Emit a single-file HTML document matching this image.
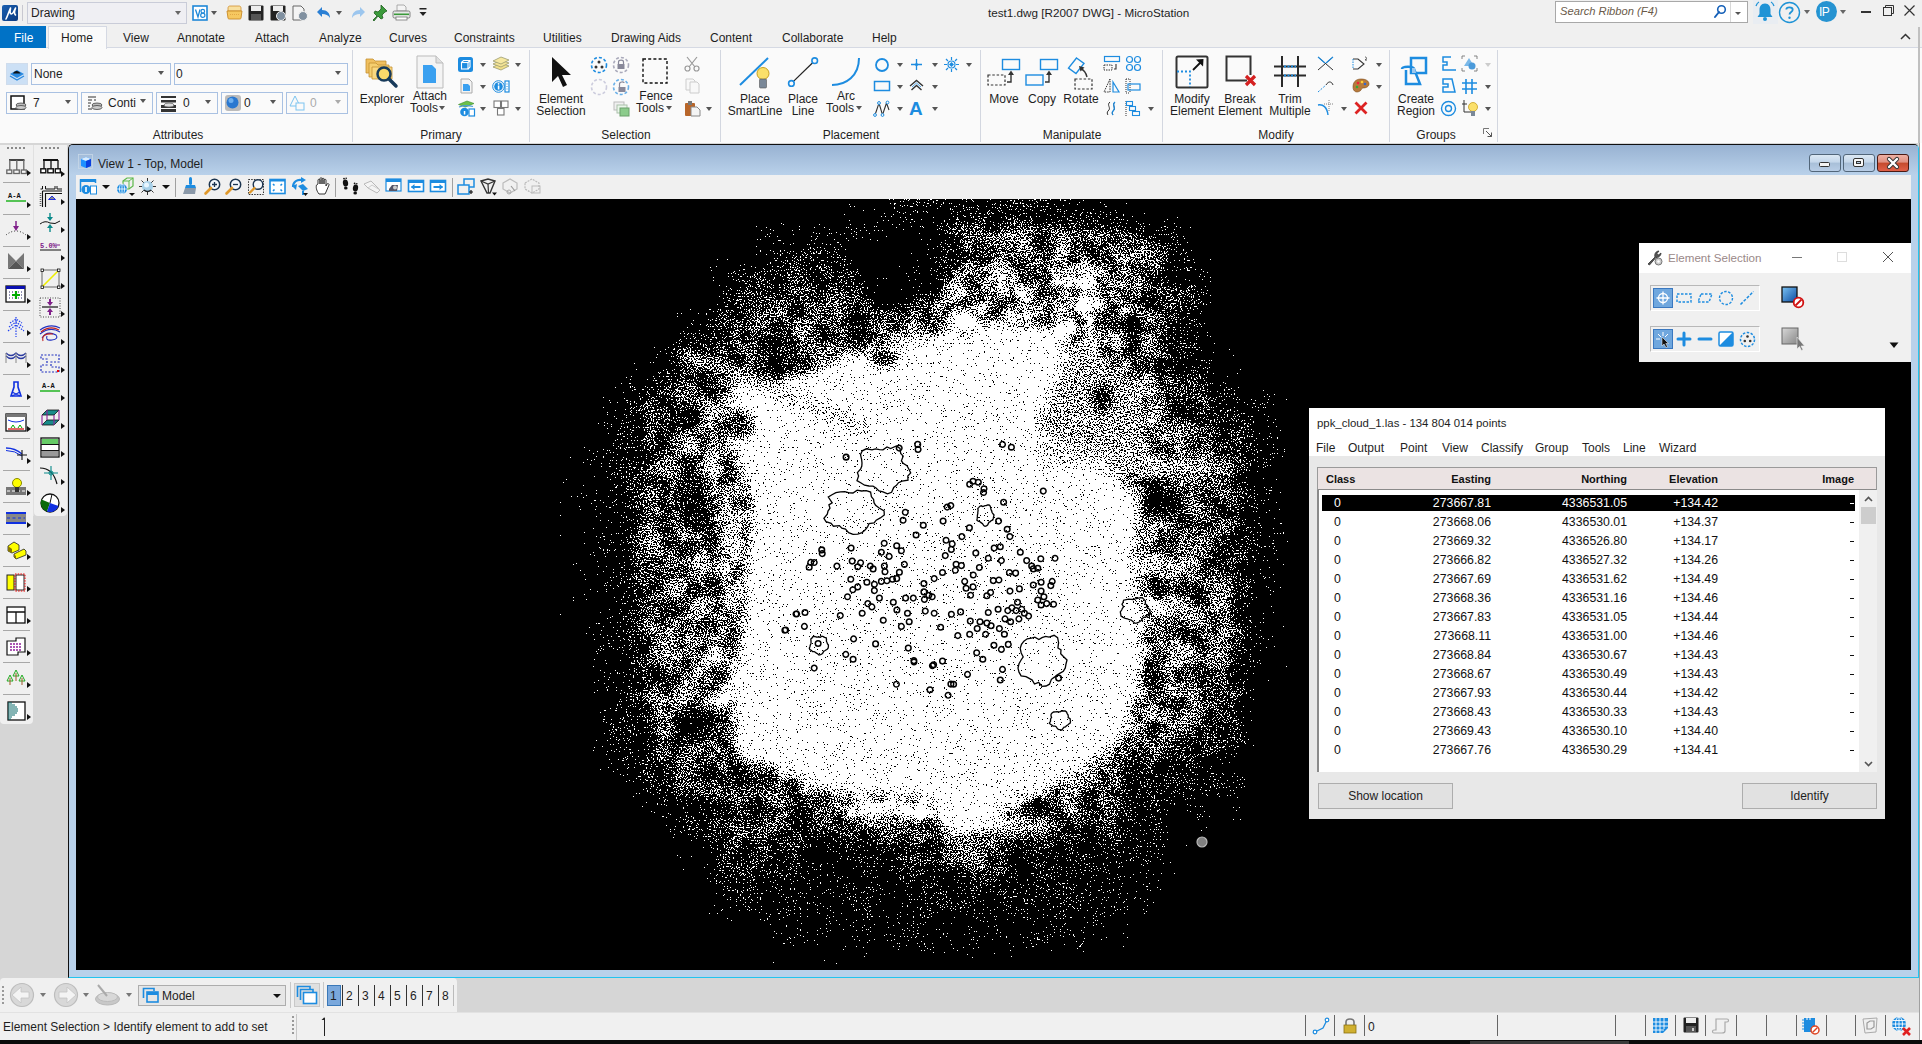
<!DOCTYPE html>
<html><head><meta charset="utf-8">
<style>
*{box-sizing:border-box;margin:0;padding:0}
html,body{width:1922px;height:1044px;overflow:hidden;background:#000}
body{position:relative;font-family:"Liberation Sans",sans-serif;font-size:12px;color:#1e1e1e}
.a{position:absolute}
.t{position:absolute;white-space:nowrap;line-height:14px}
.dd{position:absolute;width:0;height:0;border-left:3.5px solid transparent;border-right:3.5px solid transparent;border-top:4px solid #666}
svg{position:absolute;overflow:visible}
</style></head><body>
<!-- title bar -->
<div class="a" style="left:0;top:0;width:1922px;height:26px;background:#f0f0f0"></div>
<!-- tab row -->
<div class="a" style="left:0;top:26px;width:1922px;height:22px;background:#f0f0f0;border-bottom:1px solid #d5d9e3"></div>
<!-- ribbon body -->
<div class="a" style="left:0;top:48px;width:1922px;height:95px;background:#fafafa"></div>
<div class="a" style="left:1918px;top:27px;width:2px;height:117px;background:#c0c0c0"></div>
<!-- workspace -->
<div class="a" style="left:0;top:143px;width:1920px;height:869px;background:#d6d6d6"></div>
<div class="a" style="left:1919px;top:143px;width:3px;height:901px;background:#fff"></div>
<div class="a" style="left:1919px;top:143px;width:1px;height:897px;background:#a0a0a0"></div>
<!-- toolboxes -->
<div class="a" style="left:0;top:145px;width:33px;height:579px;background:#f0f0f0;border-radius:0 0 4px 4px"></div>
<div class="a" style="left:34px;top:145px;width:33px;height:371px;background:#f0f0f0;border-radius:0 0 4px 4px"></div>
<!-- view window -->
<div class="a" style="left:68px;top:144px;width:1851px;height:834px;background:#b9d1ea;border-left:1px solid #101010;border-top:1px solid #101010;border-right:1px solid #23c4ee;border-bottom:1px solid #23c4ee;border-radius:5px 5px 0 0"></div>
<div class="a" style="left:69px;top:145px;width:1849px;height:30px;background:linear-gradient(#98b2d2,#b9d1ea);border-radius:4px 4px 0 0"></div>
<div class="a" style="left:76px;top:175px;width:1835px;height:24px;background:#f0f0f0"></div>
<div class="a" style="left:76px;top:199px;width:1835px;height:771px;background:#000"></div>
<!-- bottom toolbar -->
<div class="a" style="left:0;top:978px;width:457px;height:34px;background:#f0f0f0;border-radius:4px 4px 0 0"></div>
<!-- status bar -->
<div class="a" style="left:0;top:1012px;width:1919px;height:28px;background:#f0f0f0;border-top:1px solid #e2e2e2"></div>
<div class="a" style="left:0;top:1040px;width:1922px;height:4px;background:#0a0a0a"></div>
<svg width="1835" height="771" style="left:76px;top:199px;overflow:hidden">
<defs>
<filter id="b12" x="-100" y="-100" width="2035" height="971" filterUnits="userSpaceOnUse" color-interpolation-filters="sRGB"><feGaussianBlur in="SourceGraphic" stdDeviation="10" result="d"/>
<feTurbulence type="fractalNoise" baseFrequency="0.045" numOctaves="3" seed="11" result="ln"/>
<feColorMatrix in="ln" type="matrix" values="1 0 0 0 0 1 0 0 0 0 1 0 0 0 0 0 0 0 0 1" result="ln1"/>
<feComponentTransfer in="ln1" result="lu"><feFuncR type="table" tableValues="0.0000 0.0000 0.0000 0.0000 0.0001 0.0003 0.0010 0.0024 0.0059 0.0118 0.0212 0.0379 0.0587 0.0856 0.1243 0.1652 0.2223 0.2784 0.3428 0.4252 0.4966 0.5789 0.6601 0.7238 0.7889 0.8369 0.8785 0.9179 0.9442 0.9642 0.9805 0.9896 0.9956 0.9980 0.9991 0.9997 0.9999 1.0000 1.0000 1.0000 1.0000"/><feFuncG type="table" tableValues="0.0000 0.0000 0.0000 0.0000 0.0001 0.0003 0.0010 0.0024 0.0059 0.0118 0.0212 0.0379 0.0587 0.0856 0.1243 0.1652 0.2223 0.2784 0.3428 0.4252 0.4966 0.5789 0.6601 0.7238 0.7889 0.8369 0.8785 0.9179 0.9442 0.9642 0.9805 0.9896 0.9956 0.9980 0.9991 0.9997 0.9999 1.0000 1.0000 1.0000 1.0000"/><feFuncB type="table" tableValues="0.0000 0.0000 0.0000 0.0000 0.0001 0.0003 0.0010 0.0024 0.0059 0.0118 0.0212 0.0379 0.0587 0.0856 0.1243 0.1652 0.2223 0.2784 0.3428 0.4252 0.4966 0.5789 0.6601 0.7238 0.7889 0.8369 0.8785 0.9179 0.9442 0.9642 0.9805 0.9896 0.9956 0.9980 0.9991 0.9997 0.9999 1.0000 1.0000 1.0000 1.0000"/></feComponentTransfer>
<feComposite in="d" in2="lu" operator="arithmetic" k1="1.4" k2="0.3" k3="0" k4="0"/></filter>
<filter id="b4" x="-100" y="-100" width="2035" height="971" filterUnits="userSpaceOnUse"><feGaussianBlur stdDeviation="6"/></filter>
<filter id="b3" x="-100" y="-100" width="2035" height="971" filterUnits="userSpaceOnUse"><feGaussianBlur stdDeviation="4"/></filter>
<filter id="cl" x="0" y="0" width="1835" height="771" filterUnits="userSpaceOnUse" color-interpolation-filters="sRGB">
<feTurbulence type="fractalNoise" baseFrequency="0.7" numOctaves="2" seed="7" result="n"/>
<feColorMatrix in="n" type="matrix" values="1 0 0 0 0 1 0 0 0 0 1 0 0 0 0 0 0 0 0 1" result="n1"/>
<feComponentTransfer in="n1" result="u"><feFuncR type="table" tableValues="0.0000 0.0000 0.0000 0.0000 0.0000 0.0001 0.0004 0.0012 0.0031 0.0068 0.0136 0.0277 0.0462 0.0706 0.1071 0.1467 0.2017 0.2570 0.3229 0.4087 0.4834 0.5808 0.6697 0.7394 0.8090 0.8574 0.8977 0.9349 0.9586 0.9757 0.9883 0.9943 0.9977 0.9991 0.9996 0.9999 1.0000 1.0000 1.0000 1.0000 1.0000"/><feFuncG type="table" tableValues="0.0000 0.0000 0.0000 0.0000 0.0000 0.0001 0.0004 0.0012 0.0031 0.0068 0.0136 0.0277 0.0462 0.0706 0.1071 0.1467 0.2017 0.2570 0.3229 0.4087 0.4834 0.5808 0.6697 0.7394 0.8090 0.8574 0.8977 0.9349 0.9586 0.9757 0.9883 0.9943 0.9977 0.9991 0.9996 0.9999 1.0000 1.0000 1.0000 1.0000 1.0000"/><feFuncB type="table" tableValues="0.0000 0.0000 0.0000 0.0000 0.0000 0.0001 0.0004 0.0012 0.0031 0.0068 0.0136 0.0277 0.0462 0.0706 0.1071 0.1467 0.2017 0.2570 0.3229 0.4087 0.4834 0.5808 0.6697 0.7394 0.8090 0.8574 0.8977 0.9349 0.9586 0.9757 0.9883 0.9943 0.9977 0.9991 0.9996 0.9999 1.0000 1.0000 1.0000 1.0000 1.0000"/></feComponentTransfer>
<feComposite in="SourceGraphic" in2="u" operator="arithmetic" k1="0" k2="1" k3="1" k4="-0.502" result="s"/>
<feComponentTransfer in="s"><feFuncR type="discrete" tableValues="0 1"/><feFuncG type="discrete" tableValues="0 1"/><feFuncB type="discrete" tableValues="0 1"/><feFuncA type="linear" slope="0" intercept="1"/></feComponentTransfer>
</filter>
</defs>
<g filter="url(#cl)"><rect x="-60" y="-60" width="1955" height="891" fill="#000"/>
<g filter="url(#b12)"><rect x="-60" y="-60" width="1955" height="891" fill="#000"/><rect x="764" y="-9" width="40" height="40" fill="rgb(5,5,5)"/><rect x="804" y="-9" width="40" height="40" fill="rgb(9,9,9)"/><rect x="844" y="-9" width="40" height="40" fill="rgb(18,18,18)"/><rect x="884" y="-9" width="40" height="40" fill="rgb(22,22,22)"/><rect x="924" y="-9" width="40" height="40" fill="rgb(22,22,22)"/><rect x="964" y="-9" width="40" height="40" fill="rgb(14,14,14)"/><rect x="1004" y="-9" width="40" height="40" fill="rgb(7,7,7)"/><rect x="684" y="31" width="40" height="40" fill="rgb(14,14,14)"/><rect x="724" y="31" width="40" height="40" fill="rgb(18,18,18)"/><rect x="764" y="31" width="40" height="40" fill="rgb(9,9,9)"/><rect x="804" y="31" width="40" height="40" fill="rgb(5,5,5)"/><rect x="844" y="31" width="40" height="40" fill="rgb(52,52,52)"/><rect x="884" y="31" width="40" height="40" fill="rgb(94,94,94)"/><rect x="924" y="31" width="40" height="40" fill="rgb(108,108,108)"/><rect x="964" y="31" width="40" height="40" fill="rgb(108,108,108)"/><rect x="1004" y="31" width="40" height="40" fill="rgb(94,94,94)"/><rect x="1044" y="31" width="40" height="40" fill="rgb(80,80,80)"/><rect x="1084" y="31" width="40" height="40" fill="rgb(9,9,9)"/><rect x="644" y="71" width="40" height="40" fill="rgb(28,28,28)"/><rect x="684" y="71" width="40" height="40" fill="rgb(52,52,52)"/><rect x="724" y="71" width="40" height="40" fill="rgb(66,66,66)"/><rect x="764" y="71" width="40" height="40" fill="rgb(28,28,28)"/><rect x="804" y="71" width="40" height="40" fill="rgb(9,9,9)"/><rect x="844" y="71" width="40" height="40" fill="rgb(108,108,108)"/><rect x="884" y="71" width="40" height="40" fill="rgb(148,148,148)"/><rect x="924" y="71" width="40" height="40" fill="rgb(148,148,148)"/><rect x="964" y="71" width="40" height="40" fill="rgb(148,148,148)"/><rect x="1004" y="71" width="40" height="40" fill="rgb(148,148,148)"/><rect x="1044" y="71" width="40" height="40" fill="rgb(94,94,94)"/><rect x="1084" y="71" width="40" height="40" fill="rgb(38,38,38)"/><rect x="604" y="111" width="40" height="40" fill="rgb(9,9,9)"/><rect x="644" y="111" width="40" height="40" fill="rgb(52,52,52)"/><rect x="684" y="111" width="40" height="40" fill="rgb(80,80,80)"/><rect x="724" y="111" width="40" height="40" fill="rgb(94,94,94)"/><rect x="764" y="111" width="40" height="40" fill="rgb(80,80,80)"/><rect x="804" y="111" width="40" height="40" fill="rgb(94,94,94)"/><rect x="844" y="111" width="40" height="40" fill="rgb(148,148,148)"/><rect x="884" y="111" width="40" height="40" fill="rgb(173,173,173)"/><rect x="924" y="111" width="40" height="40" fill="rgb(173,173,173)"/><rect x="964" y="111" width="40" height="40" fill="rgb(173,173,173)"/><rect x="1004" y="111" width="40" height="40" fill="rgb(173,173,173)"/><rect x="1044" y="111" width="40" height="40" fill="rgb(94,94,94)"/><rect x="1084" y="111" width="40" height="40" fill="rgb(18,18,18)"/><rect x="564" y="151" width="40" height="40" fill="rgb(9,9,9)"/><rect x="604" y="151" width="40" height="40" fill="rgb(38,38,38)"/><rect x="644" y="151" width="40" height="40" fill="rgb(66,66,66)"/><rect x="684" y="151" width="40" height="40" fill="rgb(66,66,66)"/><rect x="724" y="151" width="40" height="40" fill="rgb(94,94,94)"/><rect x="764" y="151" width="40" height="40" fill="rgb(122,122,122)"/><rect x="804" y="151" width="40" height="40" fill="rgb(94,94,94)"/><rect x="844" y="151" width="40" height="40" fill="rgb(148,148,148)"/><rect x="884" y="151" width="40" height="40" fill="rgb(194,194,194)"/><rect x="924" y="151" width="40" height="40" fill="rgb(194,194,194)"/><rect x="964" y="151" width="40" height="40" fill="rgb(148,148,148)"/><rect x="1004" y="151" width="40" height="40" fill="rgb(148,148,148)"/><rect x="1044" y="151" width="40" height="40" fill="rgb(122,122,122)"/><rect x="1084" y="151" width="40" height="40" fill="rgb(28,28,28)"/><rect x="1124" y="151" width="40" height="40" fill="rgb(5,5,5)"/><rect x="524" y="191" width="40" height="40" fill="rgb(9,9,9)"/><rect x="564" y="191" width="40" height="40" fill="rgb(58,58,58)"/><rect x="604" y="191" width="40" height="40" fill="rgb(122,122,122)"/><rect x="644" y="191" width="40" height="40" fill="rgb(94,94,94)"/><rect x="684" y="191" width="40" height="40" fill="rgb(148,148,148)"/><rect x="724" y="191" width="40" height="40" fill="rgb(148,148,148)"/><rect x="764" y="191" width="40" height="40" fill="rgb(148,148,148)"/><rect x="804" y="191" width="40" height="40" fill="rgb(148,148,148)"/><rect x="844" y="191" width="40" height="40" fill="rgb(194,194,194)"/><rect x="884" y="191" width="40" height="40" fill="rgb(194,194,194)"/><rect x="924" y="191" width="40" height="40" fill="rgb(194,194,194)"/><rect x="964" y="191" width="40" height="40" fill="rgb(148,148,148)"/><rect x="1004" y="191" width="40" height="40" fill="rgb(122,122,122)"/><rect x="1044" y="191" width="40" height="40" fill="rgb(122,122,122)"/><rect x="1084" y="191" width="40" height="40" fill="rgb(66,66,66)"/><rect x="1124" y="191" width="40" height="40" fill="rgb(28,28,28)"/><rect x="1164" y="191" width="40" height="40" fill="rgb(9,9,9)"/><rect x="484" y="231" width="40" height="40" fill="rgb(3,3,3)"/><rect x="524" y="231" width="40" height="40" fill="rgb(11,11,11)"/><rect x="564" y="231" width="40" height="40" fill="rgb(86,86,86)"/><rect x="604" y="231" width="40" height="40" fill="rgb(122,122,122)"/><rect x="644" y="231" width="40" height="40" fill="rgb(122,122,122)"/><rect x="684" y="231" width="40" height="40" fill="rgb(173,173,173)"/><rect x="724" y="231" width="40" height="40" fill="rgb(173,173,173)"/><rect x="764" y="231" width="40" height="40" fill="rgb(173,173,173)"/><rect x="804" y="231" width="40" height="40" fill="rgb(173,173,173)"/><rect x="844" y="231" width="40" height="40" fill="rgb(194,194,194)"/><rect x="884" y="231" width="40" height="40" fill="rgb(194,194,194)"/><rect x="924" y="231" width="40" height="40" fill="rgb(194,194,194)"/><rect x="964" y="231" width="40" height="40" fill="rgb(148,148,148)"/><rect x="1004" y="231" width="40" height="40" fill="rgb(148,148,148)"/><rect x="1044" y="231" width="40" height="40" fill="rgb(148,148,148)"/><rect x="1084" y="231" width="40" height="40" fill="rgb(94,94,94)"/><rect x="1124" y="231" width="40" height="40" fill="rgb(66,66,66)"/><rect x="1164" y="231" width="40" height="40" fill="rgb(12,12,12)"/><rect x="484" y="271" width="40" height="40" fill="rgb(3,3,3)"/><rect x="524" y="271" width="40" height="40" fill="rgb(11,11,11)"/><rect x="564" y="271" width="40" height="40" fill="rgb(86,86,86)"/><rect x="604" y="271" width="40" height="40" fill="rgb(122,122,122)"/><rect x="644" y="271" width="40" height="40" fill="rgb(122,122,122)"/><rect x="684" y="271" width="40" height="40" fill="rgb(173,173,173)"/><rect x="724" y="271" width="40" height="40" fill="rgb(194,194,194)"/><rect x="764" y="271" width="40" height="40" fill="rgb(194,194,194)"/><rect x="804" y="271" width="40" height="40" fill="rgb(194,194,194)"/><rect x="844" y="271" width="40" height="40" fill="rgb(194,194,194)"/><rect x="884" y="271" width="40" height="40" fill="rgb(194,194,194)"/><rect x="924" y="271" width="40" height="40" fill="rgb(194,194,194)"/><rect x="964" y="271" width="40" height="40" fill="rgb(173,173,173)"/><rect x="1004" y="271" width="40" height="40" fill="rgb(148,148,148)"/><rect x="1044" y="271" width="40" height="40" fill="rgb(94,94,94)"/><rect x="1084" y="271" width="40" height="40" fill="rgb(94,94,94)"/><rect x="1124" y="271" width="40" height="40" fill="rgb(66,66,66)"/><rect x="1164" y="271" width="40" height="40" fill="rgb(9,9,9)"/><rect x="484" y="311" width="40" height="40" fill="rgb(3,3,3)"/><rect x="524" y="311" width="40" height="40" fill="rgb(11,11,11)"/><rect x="564" y="311" width="40" height="40" fill="rgb(114,114,114)"/><rect x="604" y="311" width="40" height="40" fill="rgb(122,122,122)"/><rect x="644" y="311" width="40" height="40" fill="rgb(122,122,122)"/><rect x="684" y="311" width="40" height="40" fill="rgb(194,194,194)"/><rect x="724" y="311" width="40" height="40" fill="rgb(194,194,194)"/><rect x="764" y="311" width="40" height="40" fill="rgb(194,194,194)"/><rect x="804" y="311" width="40" height="40" fill="rgb(194,194,194)"/><rect x="844" y="311" width="40" height="40" fill="rgb(194,194,194)"/><rect x="884" y="311" width="40" height="40" fill="rgb(194,194,194)"/><rect x="924" y="311" width="40" height="40" fill="rgb(194,194,194)"/><rect x="964" y="311" width="40" height="40" fill="rgb(194,194,194)"/><rect x="1004" y="311" width="40" height="40" fill="rgb(148,148,148)"/><rect x="1044" y="311" width="40" height="40" fill="rgb(122,122,122)"/><rect x="1084" y="311" width="40" height="40" fill="rgb(94,94,94)"/><rect x="1124" y="311" width="40" height="40" fill="rgb(66,66,66)"/><rect x="1164" y="311" width="40" height="40" fill="rgb(9,9,9)"/><rect x="484" y="351" width="40" height="40" fill="rgb(3,3,3)"/><rect x="524" y="351" width="40" height="40" fill="rgb(11,11,11)"/><rect x="564" y="351" width="40" height="40" fill="rgb(86,86,86)"/><rect x="604" y="351" width="40" height="40" fill="rgb(122,122,122)"/><rect x="644" y="351" width="40" height="40" fill="rgb(122,122,122)"/><rect x="684" y="351" width="40" height="40" fill="rgb(173,173,173)"/><rect x="724" y="351" width="40" height="40" fill="rgb(194,194,194)"/><rect x="764" y="351" width="40" height="40" fill="rgb(173,173,173)"/><rect x="804" y="351" width="40" height="40" fill="rgb(173,173,173)"/><rect x="844" y="351" width="40" height="40" fill="rgb(173,173,173)"/><rect x="884" y="351" width="40" height="40" fill="rgb(173,173,173)"/><rect x="924" y="351" width="40" height="40" fill="rgb(173,173,173)"/><rect x="964" y="351" width="40" height="40" fill="rgb(173,173,173)"/><rect x="1004" y="351" width="40" height="40" fill="rgb(173,173,173)"/><rect x="1044" y="351" width="40" height="40" fill="rgb(135,135,135)"/><rect x="1084" y="351" width="40" height="40" fill="rgb(108,108,108)"/><rect x="1124" y="351" width="40" height="40" fill="rgb(66,66,66)"/><rect x="1164" y="351" width="40" height="40" fill="rgb(9,9,9)"/><rect x="484" y="391" width="40" height="40" fill="rgb(2,2,2)"/><rect x="524" y="391" width="40" height="40" fill="rgb(9,9,9)"/><rect x="564" y="391" width="40" height="40" fill="rgb(86,86,86)"/><rect x="604" y="391" width="40" height="40" fill="rgb(122,122,122)"/><rect x="644" y="391" width="40" height="40" fill="rgb(122,122,122)"/><rect x="684" y="391" width="40" height="40" fill="rgb(148,148,148)"/><rect x="724" y="391" width="40" height="40" fill="rgb(173,173,173)"/><rect x="764" y="391" width="40" height="40" fill="rgb(173,173,173)"/><rect x="804" y="391" width="40" height="40" fill="rgb(173,173,173)"/><rect x="844" y="391" width="40" height="40" fill="rgb(173,173,173)"/><rect x="884" y="391" width="40" height="40" fill="rgb(173,173,173)"/><rect x="924" y="391" width="40" height="40" fill="rgb(148,148,148)"/><rect x="964" y="391" width="40" height="40" fill="rgb(194,194,194)"/><rect x="1004" y="391" width="40" height="40" fill="rgb(194,194,194)"/><rect x="1044" y="391" width="40" height="40" fill="rgb(161,161,161)"/><rect x="1084" y="391" width="40" height="40" fill="rgb(108,108,108)"/><rect x="1124" y="391" width="40" height="40" fill="rgb(94,94,94)"/><rect x="1164" y="391" width="40" height="40" fill="rgb(5,5,5)"/><rect x="524" y="431" width="40" height="40" fill="rgb(12,12,12)"/><rect x="564" y="431" width="40" height="40" fill="rgb(86,86,86)"/><rect x="604" y="431" width="40" height="40" fill="rgb(122,122,122)"/><rect x="644" y="431" width="40" height="40" fill="rgb(122,122,122)"/><rect x="684" y="431" width="40" height="40" fill="rgb(148,148,148)"/><rect x="724" y="431" width="40" height="40" fill="rgb(173,173,173)"/><rect x="764" y="431" width="40" height="40" fill="rgb(173,173,173)"/><rect x="804" y="431" width="40" height="40" fill="rgb(194,194,194)"/><rect x="844" y="431" width="40" height="40" fill="rgb(194,194,194)"/><rect x="884" y="431" width="40" height="40" fill="rgb(194,194,194)"/><rect x="924" y="431" width="40" height="40" fill="rgb(194,194,194)"/><rect x="964" y="431" width="40" height="40" fill="rgb(194,194,194)"/><rect x="1004" y="431" width="40" height="40" fill="rgb(194,194,194)"/><rect x="1044" y="431" width="40" height="40" fill="rgb(135,135,135)"/><rect x="1084" y="431" width="40" height="40" fill="rgb(108,108,108)"/><rect x="1124" y="431" width="40" height="40" fill="rgb(80,80,80)"/><rect x="1164" y="431" width="40" height="40" fill="rgb(4,4,4)"/><rect x="524" y="471" width="40" height="40" fill="rgb(9,9,9)"/><rect x="564" y="471" width="40" height="40" fill="rgb(80,80,80)"/><rect x="604" y="471" width="40" height="40" fill="rgb(122,122,122)"/><rect x="644" y="471" width="40" height="40" fill="rgb(173,173,173)"/><rect x="684" y="471" width="40" height="40" fill="rgb(194,194,194)"/><rect x="724" y="471" width="40" height="40" fill="rgb(194,194,194)"/><rect x="764" y="471" width="40" height="40" fill="rgb(194,194,194)"/><rect x="804" y="471" width="40" height="40" fill="rgb(173,173,173)"/><rect x="844" y="471" width="40" height="40" fill="rgb(194,194,194)"/><rect x="884" y="471" width="40" height="40" fill="rgb(194,194,194)"/><rect x="924" y="471" width="40" height="40" fill="rgb(173,173,173)"/><rect x="964" y="471" width="40" height="40" fill="rgb(194,194,194)"/><rect x="1004" y="471" width="40" height="40" fill="rgb(173,173,173)"/><rect x="1044" y="471" width="40" height="40" fill="rgb(135,135,135)"/><rect x="1084" y="471" width="40" height="40" fill="rgb(108,108,108)"/><rect x="1124" y="471" width="40" height="40" fill="rgb(66,66,66)"/><rect x="524" y="511" width="40" height="40" fill="rgb(12,12,12)"/><rect x="564" y="511" width="40" height="40" fill="rgb(80,80,80)"/><rect x="604" y="511" width="40" height="40" fill="rgb(94,94,94)"/><rect x="644" y="511" width="40" height="40" fill="rgb(148,148,148)"/><rect x="684" y="511" width="40" height="40" fill="rgb(194,194,194)"/><rect x="724" y="511" width="40" height="40" fill="rgb(194,194,194)"/><rect x="764" y="511" width="40" height="40" fill="rgb(173,173,173)"/><rect x="804" y="511" width="40" height="40" fill="rgb(148,148,148)"/><rect x="844" y="511" width="40" height="40" fill="rgb(194,194,194)"/><rect x="884" y="511" width="40" height="40" fill="rgb(173,173,173)"/><rect x="924" y="511" width="40" height="40" fill="rgb(148,148,148)"/><rect x="964" y="511" width="40" height="40" fill="rgb(148,148,148)"/><rect x="1004" y="511" width="40" height="40" fill="rgb(148,148,148)"/><rect x="1044" y="511" width="40" height="40" fill="rgb(108,108,108)"/><rect x="1084" y="511" width="40" height="40" fill="rgb(80,80,80)"/><rect x="1124" y="511" width="40" height="40" fill="rgb(38,38,38)"/><rect x="524" y="551" width="40" height="40" fill="rgb(5,5,5)"/><rect x="564" y="551" width="40" height="40" fill="rgb(38,38,38)"/><rect x="604" y="551" width="40" height="40" fill="rgb(66,66,66)"/><rect x="644" y="551" width="40" height="40" fill="rgb(108,108,108)"/><rect x="684" y="551" width="40" height="40" fill="rgb(148,148,148)"/><rect x="724" y="551" width="40" height="40" fill="rgb(148,148,148)"/><rect x="764" y="551" width="40" height="40" fill="rgb(148,148,148)"/><rect x="804" y="551" width="40" height="40" fill="rgb(148,148,148)"/><rect x="844" y="551" width="40" height="40" fill="rgb(194,194,194)"/><rect x="884" y="551" width="40" height="40" fill="rgb(173,173,173)"/><rect x="924" y="551" width="40" height="40" fill="rgb(148,148,148)"/><rect x="964" y="551" width="40" height="40" fill="rgb(122,122,122)"/><rect x="1004" y="551" width="40" height="40" fill="rgb(94,94,94)"/><rect x="1044" y="551" width="40" height="40" fill="rgb(28,28,28)"/><rect x="1084" y="551" width="40" height="40" fill="rgb(28,28,28)"/><rect x="1124" y="551" width="40" height="40" fill="rgb(12,12,12)"/><rect x="564" y="591" width="40" height="40" fill="rgb(5,5,5)"/><rect x="604" y="591" width="40" height="40" fill="rgb(28,28,28)"/><rect x="644" y="591" width="40" height="40" fill="rgb(66,66,66)"/><rect x="684" y="591" width="40" height="40" fill="rgb(66,66,66)"/><rect x="724" y="591" width="40" height="40" fill="rgb(52,52,52)"/><rect x="764" y="591" width="40" height="40" fill="rgb(148,148,148)"/><rect x="804" y="591" width="40" height="40" fill="rgb(148,148,148)"/><rect x="844" y="591" width="40" height="40" fill="rgb(173,173,173)"/><rect x="884" y="591" width="40" height="40" fill="rgb(194,194,194)"/><rect x="924" y="591" width="40" height="40" fill="rgb(148,148,148)"/><rect x="964" y="591" width="40" height="40" fill="rgb(122,122,122)"/><rect x="1004" y="591" width="40" height="40" fill="rgb(66,66,66)"/><rect x="1044" y="591" width="40" height="40" fill="rgb(18,18,18)"/><rect x="1084" y="591" width="40" height="40" fill="rgb(9,9,9)"/><rect x="1124" y="591" width="40" height="40" fill="rgb(5,5,5)"/><rect x="604" y="631" width="40" height="40" fill="rgb(5,5,5)"/><rect x="644" y="631" width="40" height="40" fill="rgb(52,52,52)"/><rect x="684" y="631" width="40" height="40" fill="rgb(38,38,38)"/><rect x="724" y="631" width="40" height="40" fill="rgb(12,12,12)"/><rect x="764" y="631" width="40" height="40" fill="rgb(18,18,18)"/><rect x="804" y="631" width="40" height="40" fill="rgb(28,28,28)"/><rect x="844" y="631" width="40" height="40" fill="rgb(66,66,66)"/><rect x="884" y="631" width="40" height="40" fill="rgb(94,94,94)"/><rect x="924" y="631" width="40" height="40" fill="rgb(28,28,28)"/><rect x="964" y="631" width="40" height="40" fill="rgb(18,18,18)"/><rect x="1004" y="631" width="40" height="40" fill="rgb(18,18,18)"/><rect x="1044" y="631" width="40" height="40" fill="rgb(12,12,12)"/><rect x="1084" y="631" width="40" height="40" fill="rgb(4,4,4)"/><rect x="644" y="671" width="40" height="40" fill="rgb(18,18,18)"/><rect x="684" y="671" width="40" height="40" fill="rgb(12,12,12)"/><rect x="724" y="671" width="40" height="40" fill="rgb(9,9,9)"/><rect x="764" y="671" width="40" height="40" fill="rgb(12,12,12)"/><rect x="804" y="671" width="40" height="40" fill="rgb(12,12,12)"/><rect x="844" y="671" width="40" height="40" fill="rgb(18,18,18)"/><rect x="884" y="671" width="40" height="40" fill="rgb(18,18,18)"/><rect x="924" y="671" width="40" height="40" fill="rgb(22,22,22)"/><rect x="964" y="671" width="40" height="40" fill="rgb(18,18,18)"/><rect x="1004" y="671" width="40" height="40" fill="rgb(12,12,12)"/><rect x="1044" y="671" width="40" height="40" fill="rgb(9,9,9)"/><rect x="684" y="711" width="40" height="40" fill="rgb(7,7,7)"/><rect x="724" y="711" width="40" height="40" fill="rgb(9,9,9)"/><rect x="764" y="711" width="40" height="40" fill="rgb(9,9,9)"/><rect x="804" y="711" width="40" height="40" fill="rgb(9,9,9)"/><rect x="844" y="711" width="40" height="40" fill="rgb(9,9,9)"/><rect x="884" y="711" width="40" height="40" fill="rgb(9,9,9)"/><rect x="924" y="711" width="40" height="40" fill="rgb(9,9,9)"/><rect x="964" y="711" width="40" height="40" fill="rgb(9,9,9)"/><rect x="1004" y="711" width="40" height="40" fill="rgb(7,7,7)"/></g>
<g filter="url(#b4)"><polygon points="958,139 1014,146 1068,201 1074,253 1024,261 958,232" fill="rgb(170,170,170)"/><polygon points="656,184 725,177 770,153 844,136 878,136 930,122 982,129 992,156 975,198 958,232 1024,261 1068,301 1059,351 1067,411 1064,471 1054,527 1024,561 984,586 934,601 924,633 874,639 854,601 759,594 708,573 663,561 656,489 670,401 670,351 677,301 663,267 646,232" fill="rgb(247,247,247)"/><polygon points="964,248 1074,256 1156,267 1154,279 1074,271 964,263" fill="rgb(200,200,200)"/><polygon points="604,151 644,163 794,226 792,237 644,174 602,161" fill="rgb(190,190,190)"/></g>
<g filter="url(#b3)"><ellipse cx="819.0" cy="72.0" rx="37.0" ry="39.0" fill="#000" fill-opacity="0.8"/><ellipse cx="782.0" cy="137.5" rx="12.0" ry="15.5" fill="#000" fill-opacity="0.8"/><ellipse cx="808.0" cy="158.5" rx="14.0" ry="8.5" fill="#000" fill-opacity="0.8"/><ellipse cx="699.5" cy="167.0" rx="12.5" ry="14.0" fill="#000" fill-opacity="0.8"/><ellipse cx="611.5" cy="216.5" rx="17.5" ry="15.5" fill="#000" fill-opacity="0.8"/><ellipse cx="661.5" cy="225.5" rx="15.5" ry="13.5" fill="#000" fill-opacity="0.8"/><ellipse cx="617.0" cy="301.5" rx="19.0" ry="34.5" fill="#000" fill-opacity="0.8"/><ellipse cx="858.0" cy="55.0" rx="14.0" ry="50.0" fill="#000" fill-opacity="0.8"/><ellipse cx="1056.0" cy="139.0" rx="9.0" ry="24.0" fill="#000" fill-opacity="0.8"/><ellipse cx="1026.5" cy="198.0" rx="10.5" ry="14.0" fill="#000" fill-opacity="0.8"/><ellipse cx="1085.5" cy="304.5" rx="20.5" ry="17.5" fill="#000" fill-opacity="0.8"/><ellipse cx="622.0" cy="525.0" rx="24.0" ry="19.0" fill="#000" fill-opacity="0.8"/><ellipse cx="670.5" cy="581.5" rx="34.5" ry="10.5" fill="#000" fill-opacity="0.8"/><ellipse cx="971.5" cy="609.5" rx="17.5" ry="10.5" fill="#000" fill-opacity="0.8"/></g>
</g>
<circle cx="1126" cy="643" r="5" fill="#808080" stroke="#b8b8b8" stroke-width="1.2"/>
<path d="M772.9 258.2a2.8 2.8 0 1 0 -5.6 0a2.8 2.8 0 1 0 5.6 0M844.9 250.4a2.8 2.8 0 1 0 -5.6 0a2.8 2.8 0 1 0 5.6 0M938.2 248.2a2.8 2.8 0 1 0 -5.6 0a2.8 2.8 0 1 0 5.6 0M896.5 285.2a2.8 2.8 0 1 0 -5.6 0a2.8 2.8 0 1 0 5.6 0M905.1 283.2a2.8 2.8 0 1 0 -5.6 0a2.8 2.8 0 1 0 5.6 0M910.4 293.5a2.8 2.8 0 1 0 -5.6 0a2.8 2.8 0 1 0 5.6 0M930.4 303.2a2.8 2.8 0 1 0 -5.6 0a2.8 2.8 0 1 0 5.6 0M877.6 306.6a2.8 2.8 0 1 0 -5.6 0a2.8 2.8 0 1 0 5.6 0M832.1 313.2a2.8 2.8 0 1 0 -5.6 0a2.8 2.8 0 1 0 5.6 0M829.9 321.3a2.8 2.8 0 1 0 -5.6 0a2.8 2.8 0 1 0 5.6 0M850.1 326.3a2.8 2.8 0 1 0 -5.6 0a2.8 2.8 0 1 0 5.6 0M842.9 336.0a2.8 2.8 0 1 0 -5.6 0a2.8 2.8 0 1 0 5.6 0M869.9 322.1a2.8 2.8 0 1 0 -5.6 0a2.8 2.8 0 1 0 5.6 0M896.2 328.8a2.8 2.8 0 1 0 -5.6 0a2.8 2.8 0 1 0 5.6 0M925.4 322.1a2.8 2.8 0 1 0 -5.6 0a2.8 2.8 0 1 0 5.6 0M934.0 330.2a2.8 2.8 0 1 0 -5.6 0a2.8 2.8 0 1 0 5.6 0M970.1 292.1a2.8 2.8 0 1 0 -5.6 0a2.8 2.8 0 1 0 5.6 0M777.9 349.1a2.8 2.8 0 1 0 -5.6 0a2.8 2.8 0 1 0 5.6 0M748.5 351.0a2.8 2.8 0 1 0 -5.6 0a2.8 2.8 0 1 0 5.6 0M749.0 354.6a2.8 2.8 0 1 0 -5.6 0a2.8 2.8 0 1 0 5.6 0M741.0 363.5a2.8 2.8 0 1 0 -5.6 0a2.8 2.8 0 1 0 5.6 0M736.0 368.2a2.8 2.8 0 1 0 -5.6 0a2.8 2.8 0 1 0 5.6 0M763.7 367.1a2.8 2.8 0 1 0 -5.6 0a2.8 2.8 0 1 0 5.6 0M811.0 344.3a2.8 2.8 0 1 0 -5.6 0a2.8 2.8 0 1 0 5.6 0M808.2 353.2a2.8 2.8 0 1 0 -5.6 0a2.8 2.8 0 1 0 5.6 0M816.0 357.4a2.8 2.8 0 1 0 -5.6 0a2.8 2.8 0 1 0 5.6 0M823.5 346.8a2.8 2.8 0 1 0 -5.6 0a2.8 2.8 0 1 0 5.6 0M828.2 351.8a2.8 2.8 0 1 0 -5.6 0a2.8 2.8 0 1 0 5.6 0M831.2 365.4a2.8 2.8 0 1 0 -5.6 0a2.8 2.8 0 1 0 5.6 0M779.0 362.1a2.8 2.8 0 1 0 -5.6 0a2.8 2.8 0 1 0 5.6 0M787.4 363.8a2.8 2.8 0 1 0 -5.6 0a2.8 2.8 0 1 0 5.6 0M784.6 367.7a2.8 2.8 0 1 0 -5.6 0a2.8 2.8 0 1 0 5.6 0M797.1 367.1a2.8 2.8 0 1 0 -5.6 0a2.8 2.8 0 1 0 5.6 0M799.9 369.9a2.8 2.8 0 1 0 -5.6 0a2.8 2.8 0 1 0 5.6 0M811.2 367.1a2.8 2.8 0 1 0 -5.6 0a2.8 2.8 0 1 0 5.6 0M811.8 372.7a2.8 2.8 0 1 0 -5.6 0a2.8 2.8 0 1 0 5.6 0M826.2 373.2a2.8 2.8 0 1 0 -5.6 0a2.8 2.8 0 1 0 5.6 0M823.5 379.6a2.8 2.8 0 1 0 -5.6 0a2.8 2.8 0 1 0 5.6 0M819.3 380.2a2.8 2.8 0 1 0 -5.6 0a2.8 2.8 0 1 0 5.6 0M813.7 381.8a2.8 2.8 0 1 0 -5.6 0a2.8 2.8 0 1 0 5.6 0M808.2 382.4a2.8 2.8 0 1 0 -5.6 0a2.8 2.8 0 1 0 5.6 0M777.6 380.2a2.8 2.8 0 1 0 -5.6 0a2.8 2.8 0 1 0 5.6 0M793.7 383.2a2.8 2.8 0 1 0 -5.6 0a2.8 2.8 0 1 0 5.6 0M801.2 385.2a2.8 2.8 0 1 0 -5.6 0a2.8 2.8 0 1 0 5.6 0M784.6 387.9a2.8 2.8 0 1 0 -5.6 0a2.8 2.8 0 1 0 5.6 0M779.6 390.7a2.8 2.8 0 1 0 -5.6 0a2.8 2.8 0 1 0 5.6 0M801.2 391.6a2.8 2.8 0 1 0 -5.6 0a2.8 2.8 0 1 0 5.6 0M774.3 397.7a2.8 2.8 0 1 0 -5.6 0a2.8 2.8 0 1 0 5.6 0M806.2 399.1a2.8 2.8 0 1 0 -5.6 0a2.8 2.8 0 1 0 5.6 0M794.6 404.6a2.8 2.8 0 1 0 -5.6 0a2.8 2.8 0 1 0 5.6 0M798.7 407.9a2.8 2.8 0 1 0 -5.6 0a2.8 2.8 0 1 0 5.6 0M789.0 414.3a2.8 2.8 0 1 0 -5.6 0a2.8 2.8 0 1 0 5.6 0M767.1 416.6a2.8 2.8 0 1 0 -5.6 0a2.8 2.8 0 1 0 5.6 0M723.5 414.9a2.8 2.8 0 1 0 -5.6 0a2.8 2.8 0 1 0 5.6 0M731.8 413.5a2.8 2.8 0 1 0 -5.6 0a2.8 2.8 0 1 0 5.6 0M731.2 427.4a2.8 2.8 0 1 0 -5.6 0a2.8 2.8 0 1 0 5.6 0M712.4 431.0a2.8 2.8 0 1 0 -5.6 0a2.8 2.8 0 1 0 5.6 0M810.1 421.3a2.8 2.8 0 1 0 -5.6 0a2.8 2.8 0 1 0 5.6 0M820.1 403.2a2.8 2.8 0 1 0 -5.6 0a2.8 2.8 0 1 0 5.6 0M823.7 411.0a2.8 2.8 0 1 0 -5.6 0a2.8 2.8 0 1 0 5.6 0M832.4 399.1a2.8 2.8 0 1 0 -5.6 0a2.8 2.8 0 1 0 5.6 0M840.1 399.1a2.8 2.8 0 1 0 -5.6 0a2.8 2.8 0 1 0 5.6 0M834.3 414.3a2.8 2.8 0 1 0 -5.6 0a2.8 2.8 0 1 0 5.6 0M836.0 422.7a2.8 2.8 0 1 0 -5.6 0a2.8 2.8 0 1 0 5.6 0M828.2 427.4a2.8 2.8 0 1 0 -5.6 0a2.8 2.8 0 1 0 5.6 0M850.7 384.6a2.8 2.8 0 1 0 -5.6 0a2.8 2.8 0 1 0 5.6 0M850.7 392.9a2.8 2.8 0 1 0 -5.6 0a2.8 2.8 0 1 0 5.6 0M855.7 396.3a2.8 2.8 0 1 0 -5.6 0a2.8 2.8 0 1 0 5.6 0M859.0 397.7a2.8 2.8 0 1 0 -5.6 0a2.8 2.8 0 1 0 5.6 0M851.2 400.4a2.8 2.8 0 1 0 -5.6 0a2.8 2.8 0 1 0 5.6 0M852.1 412.1a2.8 2.8 0 1 0 -5.6 0a2.8 2.8 0 1 0 5.6 0M861.0 414.3a2.8 2.8 0 1 0 -5.6 0a2.8 2.8 0 1 0 5.6 0M872.9 341.3a2.8 2.8 0 1 0 -5.6 0a2.8 2.8 0 1 0 5.6 0M879.0 344.9a2.8 2.8 0 1 0 -5.6 0a2.8 2.8 0 1 0 5.6 0M878.2 350.4a2.8 2.8 0 1 0 -5.6 0a2.8 2.8 0 1 0 5.6 0M872.1 356.6a2.8 2.8 0 1 0 -5.6 0a2.8 2.8 0 1 0 5.6 0M902.6 354.1a2.8 2.8 0 1 0 -5.6 0a2.8 2.8 0 1 0 5.6 0M915.1 359.3a2.8 2.8 0 1 0 -5.6 0a2.8 2.8 0 1 0 5.6 0M921.0 349.1a2.8 2.8 0 1 0 -5.6 0a2.8 2.8 0 1 0 5.6 0M927.1 347.7a2.8 2.8 0 1 0 -5.6 0a2.8 2.8 0 1 0 5.6 0M928.2 361.6a2.8 2.8 0 1 0 -5.6 0a2.8 2.8 0 1 0 5.6 0M947.1 353.2a2.8 2.8 0 1 0 -5.6 0a2.8 2.8 0 1 0 5.6 0M981.8 359.3a2.8 2.8 0 1 0 -5.6 0a2.8 2.8 0 1 0 5.6 0M953.5 361.6a2.8 2.8 0 1 0 -5.6 0a2.8 2.8 0 1 0 5.6 0M958.5 367.1a2.8 2.8 0 1 0 -5.6 0a2.8 2.8 0 1 0 5.6 0M964.6 369.3a2.8 2.8 0 1 0 -5.6 0a2.8 2.8 0 1 0 5.6 0M960.1 369.9a2.8 2.8 0 1 0 -5.6 0a2.8 2.8 0 1 0 5.6 0M882.9 365.2a2.8 2.8 0 1 0 -5.6 0a2.8 2.8 0 1 0 5.6 0M888.2 366.6a2.8 2.8 0 1 0 -5.6 0a2.8 2.8 0 1 0 5.6 0M882.1 371.3a2.8 2.8 0 1 0 -5.6 0a2.8 2.8 0 1 0 5.6 0M861.0 379.6a2.8 2.8 0 1 0 -5.6 0a2.8 2.8 0 1 0 5.6 0M869.3 373.5a2.8 2.8 0 1 0 -5.6 0a2.8 2.8 0 1 0 5.6 0M900.1 376.0a2.8 2.8 0 1 0 -5.6 0a2.8 2.8 0 1 0 5.6 0M906.2 368.5a2.8 2.8 0 1 0 -5.6 0a2.8 2.8 0 1 0 5.6 0M891.5 382.4a2.8 2.8 0 1 0 -5.6 0a2.8 2.8 0 1 0 5.6 0M899.9 387.9a2.8 2.8 0 1 0 -5.6 0a2.8 2.8 0 1 0 5.6 0M892.9 389.3a2.8 2.8 0 1 0 -5.6 0a2.8 2.8 0 1 0 5.6 0M897.4 396.3a2.8 2.8 0 1 0 -5.6 0a2.8 2.8 0 1 0 5.6 0M913.7 396.8a2.8 2.8 0 1 0 -5.6 0a2.8 2.8 0 1 0 5.6 0M917.4 393.5a2.8 2.8 0 1 0 -5.6 0a2.8 2.8 0 1 0 5.6 0M920.1 381.6a2.8 2.8 0 1 0 -5.6 0a2.8 2.8 0 1 0 5.6 0M925.7 381.0a2.8 2.8 0 1 0 -5.6 0a2.8 2.8 0 1 0 5.6 0M936.2 373.5a2.8 2.8 0 1 0 -5.6 0a2.8 2.8 0 1 0 5.6 0M942.4 374.1a2.8 2.8 0 1 0 -5.6 0a2.8 2.8 0 1 0 5.6 0M936.8 392.1a2.8 2.8 0 1 0 -5.6 0a2.8 2.8 0 1 0 5.6 0M946.2 389.9a2.8 2.8 0 1 0 -5.6 0a2.8 2.8 0 1 0 5.6 0M960.1 386.0a2.8 2.8 0 1 0 -5.6 0a2.8 2.8 0 1 0 5.6 0M967.9 383.2a2.8 2.8 0 1 0 -5.6 0a2.8 2.8 0 1 0 5.6 0M979.0 382.4a2.8 2.8 0 1 0 -5.6 0a2.8 2.8 0 1 0 5.6 0M977.6 386.6a2.8 2.8 0 1 0 -5.6 0a2.8 2.8 0 1 0 5.6 0M967.9 392.1a2.8 2.8 0 1 0 -5.6 0a2.8 2.8 0 1 0 5.6 0M970.7 397.7a2.8 2.8 0 1 0 -5.6 0a2.8 2.8 0 1 0 5.6 0M964.6 401.0a2.8 2.8 0 1 0 -5.6 0a2.8 2.8 0 1 0 5.6 0M973.5 404.6a2.8 2.8 0 1 0 -5.6 0a2.8 2.8 0 1 0 5.6 0M980.4 405.2a2.8 2.8 0 1 0 -5.6 0a2.8 2.8 0 1 0 5.6 0M967.9 406.0a2.8 2.8 0 1 0 -5.6 0a2.8 2.8 0 1 0 5.6 0M944.3 403.2a2.8 2.8 0 1 0 -5.6 0a2.8 2.8 0 1 0 5.6 0M938.7 408.8a2.8 2.8 0 1 0 -5.6 0a2.8 2.8 0 1 0 5.6 0M934.6 411.6a2.8 2.8 0 1 0 -5.6 0a2.8 2.8 0 1 0 5.6 0M942.9 411.6a2.8 2.8 0 1 0 -5.6 0a2.8 2.8 0 1 0 5.6 0M948.5 410.2a2.8 2.8 0 1 0 -5.6 0a2.8 2.8 0 1 0 5.6 0M951.2 414.3a2.8 2.8 0 1 0 -5.6 0a2.8 2.8 0 1 0 5.6 0M955.4 417.1a2.8 2.8 0 1 0 -5.6 0a2.8 2.8 0 1 0 5.6 0M945.7 419.9a2.8 2.8 0 1 0 -5.6 0a2.8 2.8 0 1 0 5.6 0M937.4 422.7a2.8 2.8 0 1 0 -5.6 0a2.8 2.8 0 1 0 5.6 0M931.8 419.9a2.8 2.8 0 1 0 -5.6 0a2.8 2.8 0 1 0 5.6 0M924.9 410.2a2.8 2.8 0 1 0 -5.6 0a2.8 2.8 0 1 0 5.6 0M915.1 413.5a2.8 2.8 0 1 0 -5.6 0a2.8 2.8 0 1 0 5.6 0M906.8 422.7a2.8 2.8 0 1 0 -5.6 0a2.8 2.8 0 1 0 5.6 0M913.7 424.1a2.8 2.8 0 1 0 -5.6 0a2.8 2.8 0 1 0 5.6 0M917.9 426.8a2.8 2.8 0 1 0 -5.6 0a2.8 2.8 0 1 0 5.6 0M912.4 435.2a2.8 2.8 0 1 0 -5.6 0a2.8 2.8 0 1 0 5.6 0M904.0 429.6a2.8 2.8 0 1 0 -5.6 0a2.8 2.8 0 1 0 5.6 0M926.2 429.6a2.8 2.8 0 1 0 -5.6 0a2.8 2.8 0 1 0 5.6 0M931.2 435.2a2.8 2.8 0 1 0 -5.6 0a2.8 2.8 0 1 0 5.6 0M897.1 422.1a2.8 2.8 0 1 0 -5.6 0a2.8 2.8 0 1 0 5.6 0M896.5 435.2a2.8 2.8 0 1 0 -5.6 0a2.8 2.8 0 1 0 5.6 0M884.6 436.6a2.8 2.8 0 1 0 -5.6 0a2.8 2.8 0 1 0 5.6 0M878.2 415.2a2.8 2.8 0 1 0 -5.6 0a2.8 2.8 0 1 0 5.6 0M887.4 412.9a2.8 2.8 0 1 0 -5.6 0a2.8 2.8 0 1 0 5.6 0M867.4 428.2a2.8 2.8 0 1 0 -5.6 0a2.8 2.8 0 1 0 5.6 0M920.7 446.3a2.8 2.8 0 1 0 -5.6 0a2.8 2.8 0 1 0 5.6 0M928.2 450.4a2.8 2.8 0 1 0 -5.6 0a2.8 2.8 0 1 0 5.6 0M935.1 445.4a2.8 2.8 0 1 0 -5.6 0a2.8 2.8 0 1 0 5.6 0M903.5 453.8a2.8 2.8 0 1 0 -5.6 0a2.8 2.8 0 1 0 5.6 0M909.6 460.2a2.8 2.8 0 1 0 -5.6 0a2.8 2.8 0 1 0 5.6 0M894.3 475.4a2.8 2.8 0 1 0 -5.6 0a2.8 2.8 0 1 0 5.6 0M880.4 485.2a2.8 2.8 0 1 0 -5.6 0a2.8 2.8 0 1 0 5.6 0M874.9 496.3a2.8 2.8 0 1 0 -5.6 0a2.8 2.8 0 1 0 5.6 0M856.8 490.7a2.8 2.8 0 1 0 -5.6 0a2.8 2.8 0 1 0 5.6 0M869.3 462.1a2.8 2.8 0 1 0 -5.6 0a2.8 2.8 0 1 0 5.6 0M860.4 465.7a2.8 2.8 0 1 0 -5.6 0a2.8 2.8 0 1 0 5.6 0M840.7 461.6a2.8 2.8 0 1 0 -5.6 0a2.8 2.8 0 1 0 5.6 0M835.1 449.1a2.8 2.8 0 1 0 -5.6 0a2.8 2.8 0 1 0 5.6 0M802.4 444.9a2.8 2.8 0 1 0 -5.6 0a2.8 2.8 0 1 0 5.6 0M780.4 439.9a2.8 2.8 0 1 0 -5.6 0a2.8 2.8 0 1 0 5.6 0M779.9 460.2a2.8 2.8 0 1 0 -5.6 0a2.8 2.8 0 1 0 5.6 0M741.0 469.1a2.8 2.8 0 1 0 -5.6 0a2.8 2.8 0 1 0 5.6 0M772.6 455.4a2.8 2.8 0 1 0 -5.6 0a2.8 2.8 0 1 0 5.6 0M927.1 481.0a2.8 2.8 0 1 0 -5.6 0a2.8 2.8 0 1 0 5.6 0M985.4 479.1a2.8 2.8 0 1 0 -5.6 0a2.8 2.8 0 1 0 5.6 0M823.2 485.2a2.8 2.8 0 1 0 -5.6 0a2.8 2.8 0 1 0 5.6 0M722.8 415.0a2.8 2.8 0 1 0 -5.6 0a2.8 2.8 0 1 0 5.6 0M711.7 431.3a2.8 2.8 0 1 0 -5.6 0a2.8 2.8 0 1 0 5.6 0M744.9 444.5a2.8 2.8 0 1 0 -5.6 0a2.8 2.8 0 1 0 5.6 0M840.8 463.0a2.8 2.8 0 1 0 -5.6 0a2.8 2.8 0 1 0 5.6 0M859.2 466.7a2.8 2.8 0 1 0 -5.6 0a2.8 2.8 0 1 0 5.6 0M877.7 485.1a2.8 2.8 0 1 0 -5.6 0a2.8 2.8 0 1 0 5.6 0M929.3 470.4a2.8 2.8 0 1 0 -5.6 0a2.8 2.8 0 1 0 5.6 0M748.6 350.9a2.8 2.8 0 1 0 -5.6 0a2.8 2.8 0 1 0 5.6 0M737.5 363.4a2.8 2.8 0 1 0 -5.6 0a2.8 2.8 0 1 0 5.6 0M899.8 282.3a2.8 2.8 0 1 0 -5.6 0a2.8 2.8 0 1 0 5.6 0M910.8 289.7a2.8 2.8 0 1 0 -5.6 0a2.8 2.8 0 1 0 5.6 0M874.0 308.1a2.8 2.8 0 1 0 -5.6 0a2.8 2.8 0 1 0 5.6 0M936.7 337.6a2.8 2.8 0 1 0 -5.6 0a2.8 2.8 0 1 0 5.6 0M888.7 337.6a2.8 2.8 0 1 0 -5.6 0a2.8 2.8 0 1 0 5.6 0M967.6 359.7a2.8 2.8 0 1 0 -5.6 0a2.8 2.8 0 1 0 5.6 0M826.0 249.1a2.8 2.8 0 1 0 -5.6 0a2.8 2.8 0 1 0 5.6 0M844.5 245.4a2.8 2.8 0 1 0 -5.6 0a2.8 2.8 0 1 0 5.6 0M772.9 258.0a2.8 2.8 0 1 0 -5.6 0a2.8 2.8 0 1 0 5.6 0M929.3 245.4a2.8 2.8 0 1 0 -5.6 0a2.8 2.8 0 1 0 5.6 0" fill="none" stroke="#000" stroke-width="1.5"/><path d="M832.8 270.0 L834.7 273.9 L831.8 277.1 L832.0 281.2 L826.0 282.1 L822.5 283.7 L820.5 286.3 L817.7 288.4 L815.6 293.3 L811.5 294.9 L807.0 292.9 L803.0 292.0 L800.0 289.0 L797.0 287.2 L793.0 287.0 L788.6 286.2 L785.1 284.0 L781.0 281.6 L782.6 277.0 L781.4 273.6 L784.7 270.0 L785.8 267.0 L786.0 264.0 L785.6 260.4 L784.5 255.6 L786.3 251.8 L790.3 249.8 L796.0 250.9 L799.5 249.8 L803.5 250.7 L807.0 250.8 L811.0 248.0 L814.6 249.5 L820.4 246.9 L824.0 249.4 L824.7 254.4 L827.2 257.1 L825.4 261.8 L827.1 264.2 L831.0 266.7Z" fill="none" stroke="#000" stroke-width="1.3"/><path d="M808.1 312.0 L808.3 315.9 L804.3 318.9 L800.2 321.2 L798.1 323.9 L793.0 324.5 L791.7 327.7 L789.3 330.7 L786.0 333.6 L781.7 335.2 L777.0 335.3 L772.6 333.6 L769.5 330.1 L765.8 329.1 L763.4 326.6 L757.4 327.2 L755.1 324.4 L750.0 322.7 L747.9 319.4 L751.3 315.2 L752.0 312.0 L754.0 309.2 L752.9 305.9 L756.2 303.8 L752.3 298.0 L756.0 295.7 L759.9 293.7 L764.4 292.8 L768.9 292.7 L773.3 293.8 L777.0 294.0 L781.2 291.2 L785.4 292.0 L790.3 291.6 L794.6 293.1 L795.4 297.7 L797.6 300.4 L798.0 303.7 L799.6 306.3 L802.8 308.8Z" fill="none" stroke="#000" stroke-width="1.3"/><path d="M991.0 461.0 L990.0 465.0 L989.3 468.9 L987.3 472.3 L983.7 474.4 L980.6 476.2 L978.1 478.4 L975.4 480.3 L973.5 485.2 L970.0 487.0 L966.0 487.4 L962.6 483.3 L958.5 485.0 L956.2 481.1 L953.2 479.4 L950.0 477.7 L945.1 476.8 L943.0 473.2 L942.0 469.1 L943.0 464.8 L945.1 461.0 L947.2 457.9 L945.2 454.0 L944.2 449.4 L945.5 445.4 L947.9 442.1 L951.2 439.8 L955.4 439.2 L958.9 438.1 L962.9 440.5 L966.0 438.7 L969.6 437.4 L973.1 438.1 L978.1 436.3 L981.6 438.6 L982.6 443.7 L981.9 449.0 L985.0 450.9 L984.7 454.7 L987.4 457.5Z" fill="none" stroke="#000" stroke-width="1.3"/><path d="M752.4 446.0 L752.4 447.5 L752.2 449.0 L751.2 450.2 L749.9 451.0 L748.8 451.8 L747.6 452.3 L747.0 453.8 L745.9 455.0 L744.5 455.6 L743.0 456.1 L741.6 454.8 L740.4 454.1 L739.3 453.2 L738.2 452.6 L736.5 452.5 L735.5 451.5 L733.9 450.7 L733.3 449.2 L734.0 447.4 L734.3 446.0 L735.0 444.7 L735.0 443.4 L735.0 441.9 L734.8 440.0 L736.0 439.0 L736.9 437.6 L738.7 437.5 L740.4 438.0 L741.8 438.1 L743.0 438.0 L744.2 438.2 L745.9 437.2 L747.3 437.6 L748.5 438.4 L750.2 438.8 L750.5 440.6 L750.4 442.2 L751.0 443.4 L751.4 444.7Z" fill="none" stroke="#000" stroke-width="1.3"/><path d="M1074.2 411.0 L1073.8 413.0 L1074.2 415.2 L1072.2 416.8 L1070.0 417.9 L1067.5 418.3 L1066.4 419.7 L1065.3 421.5 L1063.5 422.8 L1061.4 424.0 L1059.0 424.4 L1056.9 422.5 L1055.2 421.0 L1053.2 420.7 L1051.5 419.8 L1049.3 419.3 L1047.1 418.4 L1045.0 417.1 L1044.7 415.0 L1044.3 413.0 L1045.7 411.0 L1046.4 409.3 L1047.6 407.8 L1046.0 405.3 L1047.0 403.5 L1047.6 401.2 L1050.2 400.6 L1052.6 400.2 L1055.0 400.4 L1057.1 400.5 L1059.0 400.0 L1061.2 399.3 L1063.6 398.8 L1066.3 398.7 L1068.0 400.4 L1069.5 402.0 L1069.2 404.7 L1070.7 405.9 L1070.5 407.8 L1072.3 409.2Z" fill="none" stroke="#000" stroke-width="1.3"/><path d="M918.0 316.0 L917.6 317.7 L917.3 319.4 L916.8 321.0 L915.2 321.6 L914.3 322.6 L913.1 323.1 L912.4 324.4 L911.6 326.0 L910.4 326.8 L909.0 327.2 L907.7 326.5 L906.7 325.0 L905.7 324.1 L904.7 323.4 L903.8 322.5 L902.2 322.2 L900.9 321.2 L901.2 319.2 L901.4 317.5 L901.4 316.0 L901.8 314.6 L901.8 313.1 L902.1 311.6 L901.8 309.4 L902.9 308.4 L903.9 307.2 L905.3 306.8 L906.8 307.5 L907.9 307.1 L909.0 306.7 L910.2 306.7 L911.6 306.0 L913.1 305.9 L914.2 307.1 L914.7 308.8 L915.0 310.6 L915.7 311.8 L916.0 313.2 L916.7 314.5Z" fill="none" stroke="#000" stroke-width="1.3"/><path d="M994.2 521.0 L994.5 522.5 L994.2 524.0 L992.8 525.0 L991.7 526.0 L990.5 526.8 L989.5 527.8 L988.1 528.2 L987.0 529.3 L985.8 531.2 L984.0 530.7 L982.3 530.5 L981.1 529.1 L980.2 527.7 L979.0 527.2 L977.1 527.2 L976.0 526.3 L974.5 525.3 L973.3 524.1 L974.5 522.4 L974.5 521.0 L974.7 519.7 L975.6 518.5 L975.0 516.9 L975.1 515.2 L976.1 513.9 L977.6 513.0 L979.3 512.8 L981.0 512.6 L982.6 512.9 L984.0 512.9 L985.6 511.9 L987.2 512.0 L989.2 511.9 L990.5 513.0 L991.2 514.6 L992.0 515.8 L992.3 517.2 L992.2 518.6 L994.1 519.6Z" fill="none" stroke="#000" stroke-width="1.3"/>
</svg>
<!-- ===== view window title & toolbar ===== -->
<svg style="left:78px;top:154px" width="16" height="16"><rect x="0.5" y="0.5" width="14" height="14" fill="none" stroke="#c8d8e8" stroke-width="0.8"/><path d="M3 5 L8 3 L13 5 L13 12 L8 14 L3 12z" fill="#1e90ff"/><path d="M3 5 L8 3 L13 5 L8 7z" fill="#d8ecff"/><path d="M8 7 L13 5 L13 12 L8 14z" fill="#0a40e0"/></svg>
<div class="t" style="left:98px;top:157px">View 1 - Top, Model</div>
<style>.wb{position:absolute;top:154px;width:32px;height:18px;border:1px solid #52667a;border-radius:3px;background:linear-gradient(#dce8f4 0%,#c4d6ea 45%,#a8bfd8 50%,#b8cde6 100%)}</style>
<div class="wb" style="left:1809px"></div>
<div class="a" style="left:1819px;top:162px;width:11px;height:5px;background:#f4f4f4;border:1px solid #333;border-radius:1.5px"></div>
<div class="wb" style="left:1843px"></div>
<div class="a" style="left:1853px;top:158px;width:11px;height:9px;background:#f8f8f8;border:1px solid #333;border-radius:2px"></div>
<div class="a" style="left:1856px;top:161px;width:5px;height:3px;background:#b8cce0;border:1px solid #333"></div>
<div class="a" style="left:1877px;top:154px;width:32px;height:18px;border:1px solid #4a1a14;border-radius:3px;background:linear-gradient(#eeb0a4 0%,#e09080 45%,#c44a2c 50%,#e06048 100%)"></div>
<svg style="left:1886px;top:157px" width="14" height="12"><path d="M3 2 L11 10 M11 2 L3 10" stroke="#333" stroke-width="4.2" stroke-linecap="round"/><path d="M3 2 L11 10 M11 2 L3 10" stroke="#fff" stroke-width="2.4" stroke-linecap="round"/></svg>
<!-- toolbar -->
<svg style="left:79px;top:178px" width="19" height="17"><path d="M1.5 14 V2 H16.5 V5" fill="none" stroke="#1d8ce0" stroke-width="1.5"/><rect x="1" y="1" width="16" height="3" fill="#1d8ce0"/><circle cx="7" cy="11.5" r="4.5" fill="#1d8ce0"/><rect x="6.2" y="9" width="1.6" height="5" fill="#fff"/><rect x="11.5" y="8" width="6" height="8" fill="#fff" stroke="#1d8ce0"/></svg>
<div class="dd" style="left:102px;top:185px;border-top-color:#111;border-left-width:4px;border-right-width:4px;border-top-width:4.5px"></div>
<svg style="left:116px;top:177px" width="18" height="19"><path d="M7 4 L11 1 H17 V9 L13 12 H7z" fill="none" stroke="#5cb84a" stroke-width="1.2"/><path d="M7 4 H13 V12 M13 4 L17 1" fill="none" stroke="#5cb84a" stroke-width="1"/><circle cx="6" cy="12" r="5" fill="#1d8ce0"/><path d="M1 12 H11 M6 7 V17" stroke="#fff" stroke-width="0.8"/><ellipse cx="6" cy="12" rx="2.5" ry="5" fill="none" stroke="#fff" stroke-width="0.8"/></svg>
<div class="dd" style="left:129px;top:193px;border-top-color:#111;border-left-width:3px;border-right-width:3px;border-top-width:3px"></div>
<svg style="left:139px;top:178px" width="17" height="17"><path d="M8.5 0 V17 M0 8.5 H17 M2.5 2.5 L14.5 14.5 M14.5 2.5 L2.5 14.5" stroke="#333" stroke-width="1"/><circle cx="8.5" cy="8.5" r="5.5" fill="#a8d0e8"/><circle cx="7.5" cy="7" r="2.5" fill="#e8f6ff"/><path d="M5 12 Q8.5 15 12 12" fill="none" stroke="#222" stroke-width="1.5"/></svg>
<div class="dd" style="left:162px;top:185px;border-top-color:#111;border-left-width:4px;border-right-width:4px;border-top-width:4.5px"></div>
<div class="a" style="left:175px;top:178px;width:1px;height:19px;background:#a0a0a0"></div>
<svg style="left:183px;top:177px" width="14" height="18"><rect x="6" y="0" width="3" height="8" rx="1.5" fill="#1d8ce0"/><path d="M3 8 H12 L13 11 H2z" fill="#1d8ce0"/><path d="M2 11 H13 L12 17 H0z" fill="#8a98a8"/></svg>
<svg style="left:204px;top:178px" width="17" height="17"><circle cx="10.5" cy="6.5" r="5.2" fill="#f4f8fc" stroke="#1c3550" stroke-width="1.5"/><path d="M10.5 4 V9 M8 6.5 H13" stroke="#1c3550" stroke-width="1.3"/><path d="M7 10 L1.5 15.5" stroke="#e0982a" stroke-width="2.6" stroke-linecap="round"/></svg>
<svg style="left:225px;top:178px" width="17" height="17"><circle cx="10.5" cy="6.5" r="5.2" fill="#f4f8fc" stroke="#1c3550" stroke-width="1.5"/><path d="M8 6.5 H13" stroke="#1c3550" stroke-width="1.3"/><path d="M7 10 L1.5 15.5" stroke="#e0982a" stroke-width="2.6" stroke-linecap="round"/></svg>
<svg style="left:248px;top:178px" width="17" height="18"><rect x="0.5" y="1.5" width="15" height="15" fill="none" stroke="#333" stroke-dasharray="1.5 1.2"/><circle cx="10" cy="6.5" r="4.8" fill="#f4f8fc" stroke="#1c3550" stroke-width="1.4"/><path d="M6.5 10 L2 14.5" stroke="#e0982a" stroke-width="2.4" stroke-linecap="round"/></svg>
<svg style="left:269px;top:178px" width="17" height="17"><rect x="1" y="1.5" width="15" height="14" fill="#fff" stroke="#1d8ce0" stroke-width="1.6"/><rect x="1" y="1" width="15" height="2.5" fill="#1d8ce0"/><path d="M4 6 L5.5 7.5 M13 6 L11.5 7.5 M4 13 L5.5 11.5 M13 13 L11.5 11.5" stroke="#1d8ce0" stroke-width="1.6"/></svg>
<svg style="left:291px;top:177px" width="19" height="19"><path d="M2 10 C2 5 6 2 11 3" fill="none" stroke="#1d8ce0" stroke-width="2.2"/><path d="M10 0 L15 3 L10 6z" fill="#1d8ce0"/><path d="M1 9 L6 7 L5 13z" fill="#1d8ce0"/><path d="M7 9 L12 7 L17 12 L12 14z" fill="#1d8ce0"/><path d="M12 14 V18" stroke="#1d8ce0" stroke-width="2"/><path d="M12 16 L14.5 19 L17 16z" fill="#111"/></svg>
<svg style="left:315px;top:177px" width="15" height="18"><path d="M4 17 C1 13 1 10 1.5 8 L3 7 V3 C3 2 5 2 5 3 V7 V1.5 C5 0.5 7 0.5 7 1.5 V7 V2 C7 1 9 1 9 2 V7 V3 C9 2 11 2 11 3 V9 L12 7 C13 6 14.5 7 14 8 L11 15 L10 17z" fill="#fff" stroke="#333" stroke-width="1"/></svg>
<div class="a" style="left:335px;top:178px;width:1px;height:19px;background:#a0a0a0"></div>
<svg style="left:341px;top:177px" width="19" height="20"><ellipse cx="4.5" cy="6" rx="2.6" ry="3.6" fill="#111" transform="rotate(-10 4.5 6)"/><ellipse cx="4.8" cy="11" rx="1.8" ry="1.6" fill="#111"/><circle cx="3" cy="1.6" r="0.9" fill="#111"/><circle cx="5.2" cy="1.3" r="0.8" fill="#111"/><ellipse cx="14.5" cy="11" rx="2.6" ry="3.6" fill="#111" transform="rotate(10 14.5 11)"/><ellipse cx="14.2" cy="16" rx="1.8" ry="1.6" fill="#111"/><circle cx="13.6" cy="6.4" r="0.9" fill="#111"/><circle cx="15.8" cy="6.7" r="0.8" fill="#111"/></svg>
<svg style="left:363px;top:179px" width="18" height="15"><path d="M1 5 L8 2 L17 11 L14 14 L5 9z" fill="#f4f4f4" stroke="#b8b8b8" stroke-width="1"/><path d="M5 9 L9 6 L17 11" fill="none" stroke="#ccc"/></svg>
<svg style="left:385px;top:178px" width="17" height="17"><rect x="1" y="1" width="15" height="12" fill="#fff" stroke="#1d8ce0" stroke-width="1.2"/><rect x="1" y="1" width="15" height="3" fill="#1d8ce0"/><path d="M4 11 L7 7 H13 L12 13 H4z" fill="#556"/><circle cx="10" cy="9.5" r="2" fill="#ccc"/></svg>
<svg style="left:407px;top:179px" width="18" height="14"><rect x="1.5" y="1.5" width="15" height="11" fill="#fff" stroke="#1d8ce0" stroke-width="1.6"/><rect x="1" y="1" width="16" height="3" fill="#1d8ce0"/><path d="M4.5 8 H13.5" stroke="#1d8ce0" stroke-width="2"/><path d="M4 8 L7.5 5 V11z" fill="#1d8ce0"/></svg>
<svg style="left:429px;top:179px" width="18" height="14"><rect x="1.5" y="1.5" width="15" height="11" fill="#fff" stroke="#1d8ce0" stroke-width="1.6"/><rect x="1" y="1" width="16" height="3" fill="#1d8ce0"/><path d="M4.5 8 H13.5" stroke="#1d8ce0" stroke-width="2"/><path d="M14 8 L10.5 5 V11z" fill="#1d8ce0"/></svg>
<div class="a" style="left:452px;top:178px;width:1px;height:19px;background:#a0a0a0"></div>
<svg style="left:457px;top:178px" width="18" height="17"><rect x="7" y="1" width="10" height="8" fill="none" stroke="#1d8ce0" stroke-width="1.5"/><rect x="1" y="7" width="11" height="9" fill="#f0f0f0" stroke="#1d8ce0" stroke-width="1.5"/><path d="M14 12 V16 M12 14 H16" stroke="#111" stroke-width="1.2"/></svg>
<svg style="left:479px;top:178px" width="19" height="19"><path d="M2 3 L9 1 L16 3 L11 15 L8 15z" fill="none" stroke="#333" stroke-width="1.4"/><path d="M2 3 L9 6 L16 3 M9 6 L9.5 15" fill="none" stroke="#333" stroke-width="1.2"/><path d="M13 14.5 L15.5 17.5 L18 14.5z" fill="#111"/></svg>
<svg style="left:501px;top:177px" width="18" height="19"><path d="M2 6 L9 2 L16 6 L16 12 L9 16 L2 12z" fill="none" stroke="#bbb" stroke-width="1.2"/><circle cx="8" cy="15" r="2" fill="none" stroke="#aaa"/><path d="M10 9 L14 14" stroke="#999" stroke-width="1.2"/></svg>
<svg style="left:523px;top:177px" width="18" height="19"><path d="M2 6 L9 2 L16 6 L16 12 L9 16 L2 12z" fill="none" stroke="#bbb" stroke-width="1.2" stroke-dasharray="2 1"/><rect x="9" y="9" width="8" height="7" fill="none" stroke="#bbb"/></svg>
<!-- ===== ribbon ===== -->
<style>
.gl{position:absolute;top:128px;width:140px;text-align:center;line-height:14px;white-space:nowrap}
.bl{position:absolute;width:80px;text-align:center;line-height:12px;white-space:nowrap}
.sep{position:absolute;top:50px;width:1px;height:92px;background:#d3d7e0}
.cb{position:absolute;background:#fafafa;border:1px solid #a9c1e2}
.cd{position:absolute;width:0;height:0;border-left:3.5px solid transparent;border-right:3.5px solid transparent;border-top:4px solid #555}
</style>
<div class="sep" style="left:352px"></div>
<div class="sep" style="left:529px"></div>
<div class="sep" style="left:720px"></div>
<div class="sep" style="left:980px"></div>
<div class="sep" style="left:1162px"></div>
<div class="sep" style="left:1389px"></div>
<div class="sep" style="left:1497px"></div>
<div class="gl" style="left:108px">Attributes</div>
<div class="gl" style="left:371px">Primary</div>
<div class="gl" style="left:556px">Selection</div>
<div class="gl" style="left:781px">Placement</div>
<div class="gl" style="left:1002px">Manipulate</div>
<div class="gl" style="left:1206px">Modify</div>
<div class="gl" style="left:1366px">Groups</div>
<svg style="left:1483px;top:128px" width="10" height="10"><path d="M0.5 0.5 H6 M0.5 0.5 V6" stroke="#777" fill="none"/><path d="M3 3 L8.5 8.5 M8.5 4.5 V8.5 H4.5" stroke="#555" fill="none"/></svg>
<!-- Attributes -->
<div class="a" style="left:6px;top:63px;width:22px;height:22px;background:#cce0f5;border:1px solid #cfdcec"></div>
<svg style="left:8px;top:65px" width="18" height="18"><path d="M2 9 L9 13 L16 9 L9 5z" fill="#2b8ae0"/><path d="M2 11 L9 15 L16 11" fill="none" stroke="#2b8ae0" stroke-width="1.3"/><path d="M5 8.5 C6 5 11 5 12.5 8.5z" fill="#111"/></svg>
<div class="cb" style="left:31px;top:63px;width:140px;height:22px"></div>
<div class="t" style="left:34px;top:67px">None</div>
<div class="cd" style="left:158px;top:71px"></div>
<div class="cb" style="left:174px;top:63px;width:174px;height:22px"></div>
<div class="t" style="left:176px;top:67px">0</div>
<div class="cd" style="left:335px;top:71px"></div>
<div class="cb" style="left:6px;top:92px;width:72px;height:22px"></div>
<svg style="left:10px;top:95px" width="17" height="16"><rect x="1" y="1" width="13" height="13" fill="#fff" stroke="#111" stroke-width="1.5"/><ellipse cx="11" cy="10" rx="5" ry="2" fill="#bbb" stroke="#444" stroke-width="0.8"/><ellipse cx="11" cy="12.5" rx="5" ry="2" fill="#ccc" stroke="#444" stroke-width="0.8"/></svg>
<div class="t" style="left:33px;top:96px">7</div>
<div class="cd" style="left:65px;top:100px"></div>
<div class="cb" style="left:81px;top:92px;width:72px;height:22px"></div>
<svg style="left:87px;top:95px" width="16" height="16"><path d="M1 2 H9 M1 5 H5 M7 5 H9 M1 8 H4 M1 11 H3 M1 14 H5" stroke="#333"/><ellipse cx="10" cy="10" rx="5" ry="2" fill="#bbb" stroke="#444" stroke-width="0.8"/><ellipse cx="10" cy="12.5" rx="5" ry="2" fill="#ccc" stroke="#444" stroke-width="0.8"/></svg>
<div class="t" style="left:108px;top:96px">Conti</div>
<div class="cd" style="left:140px;top:99px"></div>
<div class="cb" style="left:156px;top:92px;width:62px;height:22px"></div>
<svg style="left:160px;top:95px" width="17" height="17"><rect x="1" y="1" width="15" height="2" fill="#333"/><rect x="1" y="5" width="15" height="2.5" fill="#333"/><rect x="1" y="10" width="15" height="3" fill="#333"/><rect x="1" y="14" width="15" height="3" fill="#333"/><ellipse cx="9" cy="10" rx="5" ry="2" fill="#ddd" stroke="#666" stroke-width="0.8"/></svg>
<div class="t" style="left:183px;top:96px">0</div>
<div class="cd" style="left:205px;top:100px"></div>
<div class="cb" style="left:221px;top:92px;width:62px;height:22px"></div>
<svg style="left:224px;top:94px" width="18" height="18"><rect x="1" y="1" width="16" height="16" rx="3" fill="#bbb"/><circle cx="8.5" cy="8.5" r="6" fill="#2a78d0"/><circle cx="7" cy="6.5" r="2.5" fill="#6eb0f0"/></svg>
<div class="t" style="left:244px;top:96px">0</div>
<div class="cd" style="left:270px;top:100px"></div>
<div class="cb" style="left:286px;top:92px;width:62px;height:22px"></div>
<svg style="left:289px;top:95px" width="18" height="17"><path d="M6 1 L1 11 H11z" fill="none" stroke="#7cc4f0" stroke-width="1"/><rect x="7" y="8" width="8" height="7" fill="#fafafa" stroke="#7cc4f0"/></svg>
<div class="t" style="left:310px;top:96px;color:#aaa">0</div>
<div class="cd" style="left:335px;top:100px;border-top-color:#aaa"></div>
<!-- Primary -->
<svg style="left:365px;top:55px" width="36" height="34"><path d="M1 4 h7 l2 2 h11 v12 h-20z" fill="#f0c060" stroke="#c49030" stroke-width="0.8"/><path d="M4 8 h7 l2 2 h11 v12 h-20z" fill="#f6cf70" stroke="#c49030" stroke-width="0.8"/><path d="M7 12 h20 v12 h-20z" fill="#fad880" stroke="#c49030" stroke-width="0.8"/><circle cx="19" cy="19" r="6.5" fill="#fbd96a" stroke="#173a5a" stroke-width="2.5"/><path d="M24 24 L31 31" stroke="#173a5a" stroke-width="3.5" stroke-linecap="round"/></svg>
<div class="bl" style="left:342px;top:93px">Explorer</div>
<svg style="left:416px;top:55px" width="28" height="34"><path d="M1 1 H20 L27 8 V33 H1z" fill="#f4f4f4" stroke="#bbb"/><path d="M20 1 V8 H27" fill="#e0e0e0" stroke="#bbb"/><path d="M7 10 H16 L20 14 V28 H7z" fill="#3aa0f0"/></svg>
<div class="bl" style="left:390px;top:90px">Attach</div>
<div class="bl" style="left:384px;top:102px">Tools</div>
<div class="cd" style="left:439px;top:106px"></div>
<svg style="left:458px;top:57px" width="16" height="16"><rect x="0" y="0" width="15" height="15" rx="2.5" fill="#1d8ce0"/><rect x="3.5" y="5.5" width="6.5" height="6.5" fill="none" stroke="#fff" stroke-width="1.1"/><path d="M3.5 5.5 L5.5 3.5 H12 V10 L10 12 M10 5.5 L12 3.5" fill="none" stroke="#fff" stroke-width="1.1"/></svg>
<div class="cd" style="left:480px;top:63px"></div>
<svg style="left:460px;top:78px" width="13" height="16"><path d="M1 1 H9 L12 4 V15 H1z" fill="#f4f4f4" stroke="#aaa"/><path d="M3 6 H8 L10 8 V13 H3z" fill="#3aa0f0"/></svg>
<div class="cd" style="left:480px;top:85px"></div>
<svg style="left:458px;top:100px" width="17" height="17"><path d="M0.5 4.5 L9 1 L16 3.5 L7.5 7z" fill="#6cc04a" stroke="#3a8a2a" stroke-width="0.6"/><path d="M1 7 Q8 4.5 15 6.5" fill="none" stroke="#4a9ada" stroke-width="1.2"/><circle cx="6.5" cy="12" r="4.3" fill="#1d8ce0"/><rect x="5.8" y="11" width="1.5" height="3.5" fill="#fff"/><rect x="11" y="9" width="5.5" height="7" fill="#fff" stroke="#1d8ce0" stroke-width="1.2"/></svg>
<div class="cd" style="left:480px;top:107px"></div>
<svg style="left:492px;top:56px" width="18" height="16"><path d="M1 11 L9 7 L17 10 L9 14z" fill="#f2e08a" stroke="#9a9a70" stroke-width="0.8"/><path d="M1 8 L9 4 L17 7 L9 11z" fill="#f4e496" stroke="#9a9a70" stroke-width="0.8"/><path d="M1 5 L9 1 L17 4 L9 8z" fill="#f6e8a0" stroke="#9a9a70" stroke-width="0.8"/></svg>
<div class="cd" style="left:515px;top:63px"></div>
<svg style="left:492px;top:80px" width="18" height="13"><circle cx="6.5" cy="6.5" r="5.8" fill="none" stroke="#1d8ce0" stroke-width="1"/><circle cx="6.5" cy="6.5" r="4.3" fill="#1d8ce0"/><rect x="5.8" y="5.5" width="1.6" height="4" fill="#fff"/><circle cx="6.6" cy="3.8" r="0.9" fill="#fff"/><rect x="13" y="1" width="4" height="11" fill="#fff" stroke="#1d8ce0" stroke-width="1.2"/><path d="M15 3.5 V4.5 M15 6 V7 M15 8.5 V9.5" stroke="#1d8ce0"/></svg>
<svg style="left:493px;top:100px" width="16" height="16"><rect x="1" y="1" width="6.5" height="6.5" fill="#fff" stroke="#777" stroke-width="1.1"/><rect x="8.5" y="1" width="6.5" height="6.5" fill="#fff" stroke="#777" stroke-width="1.1"/><rect x="4.5" y="8.5" width="6.5" height="6.5" fill="#fff" stroke="#777" stroke-width="1.1"/></svg>
<div class="cd" style="left:515px;top:107px"></div>
<!-- Selection -->
<svg style="left:550px;top:56px" width="24" height="33"><path d="M2 1 L2 26 L8 20 L13 31 L17 29 L12 19 L21 19z" fill="#111"/></svg>
<div class="bl" style="left:521px;top:93px">Element</div>
<div class="bl" style="left:521px;top:105px">Selection</div>
<svg style="left:590px;top:56px" width="18" height="18"><circle cx="9" cy="9" r="7.5" fill="none" stroke="#1d8ce0" stroke-width="1.6" stroke-dasharray="3 2"/><circle cx="9" cy="6" r="1.5" fill="#333"/><circle cx="6" cy="11" r="1.5" fill="#333"/><circle cx="12" cy="11" r="1.5" fill="#333"/></svg>
<svg style="left:612px;top:56px" width="18" height="18"><circle cx="9" cy="9" r="7.5" fill="none" stroke="#aab" stroke-width="1.6" stroke-dasharray="3 2"/><rect x="5.5" y="8" width="7" height="5" fill="#889"/><path d="M6.5 8 V6 C6.5 3.5 11.5 3.5 11.5 6 V8" fill="none" stroke="#889" stroke-width="1.2"/></svg>
<svg style="left:590px;top:78px" width="18" height="18"><circle cx="9" cy="9" r="7.5" fill="none" stroke="#ccd" stroke-width="1.6" stroke-dasharray="3 2"/></svg>
<svg style="left:612px;top:78px" width="18" height="18"><circle cx="9" cy="9" r="7.5" fill="none" stroke="#6ab0e8" stroke-width="1.6" stroke-dasharray="3 2"/><rect x="6.5" y="9" width="7" height="5" fill="#889"/><path d="M7.5 9 V6 C7.5 3.5 12 3.5 12 5" fill="none" stroke="#889" stroke-width="1.2"/></svg>
<svg style="left:613px;top:101px" width="17" height="16"><rect x="1" y="1" width="10" height="8" fill="#f0f0f0" stroke="#bbb"/><rect x="4" y="4" width="10" height="8" fill="#eaf6ea" stroke="#aac0aa"/><rect x="7" y="7" width="9" height="8" fill="#8ccc8c" stroke="#6aa06a"/></svg>
<svg style="left:642px;top:58px" width="27" height="27"><rect x="1" y="1" width="24" height="24" fill="none" stroke="#111" stroke-width="1.4" stroke-dasharray="3 2.2"/></svg>
<div class="bl" style="left:616px;top:90px">Fence</div>
<div class="bl" style="left:610px;top:102px">Tools</div>
<div class="cd" style="left:666px;top:106px"></div>
<svg style="left:684px;top:56px" width="16" height="16"><circle cx="3.5" cy="12.5" r="2.5" fill="none" stroke="#999" stroke-width="1.2"/><circle cx="12.5" cy="12.5" r="2.5" fill="none" stroke="#999" stroke-width="1.2"/><path d="M5 11 L13 1 M11 11 L3 1" stroke="#999" stroke-width="1.2"/></svg>
<svg style="left:685px;top:78px" width="16" height="16"><path d="M1 1 H8 L10 3 V12 H1z" fill="#f8f8f8" stroke="#ccc"/><path d="M5 4 H12 L14 6 V15 H5z" fill="#f8f8f8" stroke="#ccc"/></svg>
<svg style="left:684px;top:100px" width="17" height="17"><rect x="1" y="3" width="10" height="13" rx="1" fill="#b8662a"/><rect x="4" y="1" width="4" height="4" fill="#777"/><path d="M7 7 H13 L16 10 V16 H7z" fill="#f4f4f4" stroke="#888"/></svg>
<div class="cd" style="left:706px;top:107px"></div>
<!-- Placement -->
<svg style="left:738px;top:56px" width="34" height="34"><path d="M2 29 L30 2" stroke="#1d8ce0" stroke-width="2"/><circle cx="25" cy="17.5" r="6" fill="#fbe06a" stroke="#c8a020"/><rect x="21.5" y="23" width="7" height="9" rx="1" fill="#7a8898" stroke="#555" stroke-width="0.6"/></svg>
<div class="bl" style="left:715px;top:93px">Place</div>
<div class="bl" style="left:715px;top:105px">SmartLine</div>
<svg style="left:786px;top:56px" width="34" height="34"><path d="M5.4 27.4 L28.7 4.7" stroke="#222" stroke-width="1.2"/><circle cx="5.4" cy="27.4" r="2.8" fill="#fafafa" stroke="#1d8ce0" stroke-width="1.6"/><circle cx="28.7" cy="4.7" r="2.8" fill="#fafafa" stroke="#1d8ce0" stroke-width="1.6"/></svg>
<div class="bl" style="left:763px;top:93px">Place</div>
<div class="bl" style="left:763px;top:105px">Line</div>
<svg style="left:830px;top:56px" width="34" height="34"><path d="M2 29 C16 29 29 20 29 2" fill="none" stroke="#1d8ce0" stroke-width="2"/></svg>
<div class="bl" style="left:806px;top:90px">Arc</div>
<div class="bl" style="left:800px;top:102px">Tools</div>
<div class="cd" style="left:856px;top:106px"></div>
<svg style="left:874px;top:57px" width="16" height="16"><circle cx="8" cy="8" r="6" fill="none" stroke="#1d8ce0" stroke-width="1.8"/></svg>
<div class="cd" style="left:897px;top:63px"></div>
<svg style="left:910px;top:58px" width="13" height="13"><path d="M6.5 1 V12 M1 6.5 H12" stroke="#1d8ce0" stroke-width="1.3"/><circle cx="6.5" cy="6.5" r="1.5" fill="#1d8ce0"/></svg>
<div class="cd" style="left:932px;top:63px"></div>
<svg style="left:943px;top:56px" width="17" height="17"><circle cx="8.5" cy="8.5" r="3.5" fill="none" stroke="#1d8ce0" stroke-width="1.2"/><path d="M8.5 1 V4 M8.5 13 V16 M1 8.5 H4 M13 8.5 H16 M3 3 L5 5 M12 12 L14 14 M14 3 L12 5 M3 14 L5 12" stroke="#1d8ce0" stroke-width="1.2"/><path d="M8.5 6 L11 8.5 L8.5 11 L6 8.5z" fill="#1d8ce0"/></svg>
<div class="cd" style="left:966px;top:63px"></div>
<svg style="left:873px;top:80px" width="18" height="12"><rect x="1.5" y="1.5" width="15" height="9" fill="none" stroke="#1d8ce0" stroke-width="1.5"/></svg>
<div class="cd" style="left:897px;top:85px"></div>
<svg style="left:909px;top:79px" width="15" height="12"><path d="M1 7 L7.5 1.5 L14 7 M2.5 11 L7.5 6.5 L12.5 11" fill="none" stroke="#333" stroke-width="1.4"/><path d="M3 8 L7.5 4 L12 8" fill="none" stroke="#1d8ce0" stroke-width="0.8"/></svg>
<div class="cd" style="left:932px;top:85px"></div>
<svg style="left:873px;top:100px" width="18" height="17"><path d="M2 15 L6 3 L9.5 15 L13.5 3 L16 10" fill="none" stroke="#333" stroke-width="1.1"/><circle cx="2" cy="15" r="1.4" fill="#fff" stroke="#1d8ce0"/><circle cx="6" cy="3" r="1.4" fill="#fff" stroke="#1d8ce0"/><circle cx="9.5" cy="15" r="1.4" fill="#fff" stroke="#1d8ce0"/><circle cx="14.5" cy="2.5" r="1.4" fill="#fff" stroke="#1d8ce0"/></svg>
<div class="cd" style="left:897px;top:107px"></div>
<div class="t" style="left:909px;top:99px;font-size:19px;line-height:19px;font-weight:bold;color:#1d8ce0">A</div>
<div class="cd" style="left:932px;top:107px"></div>
<!-- Manipulate -->
<svg style="left:986px;top:57px" width="36" height="32"><rect x="16.5" y="2.5" width="17" height="10" fill="none" stroke="#1d8ce0" stroke-width="1.4"/><rect x="2" y="18" width="17" height="10" fill="none" stroke="#333" stroke-width="1.2" stroke-dasharray="2.5 1.8"/><path d="M21 25 H25 V17" fill="none" stroke="#333" stroke-width="1.4"/><path d="M22 18 L25 13.5 L28 18z" fill="#333"/></svg>
<div class="bl" style="left:964px;top:93px">Move</div>
<svg style="left:1024px;top:57px" width="36" height="32"><rect x="16.5" y="2.5" width="17" height="10" fill="none" stroke="#1d8ce0" stroke-width="1.4"/><rect x="2" y="18" width="17" height="10" fill="none" stroke="#1d8ce0" stroke-width="1.4"/><path d="M21 25 H25 V17" fill="none" stroke="#333" stroke-width="1.4"/><path d="M22 18 L25 13.5 L28 18z" fill="#333"/></svg>
<div class="bl" style="left:1002px;top:93px">Copy</div>
<svg style="left:1067px;top:55px" width="36" height="36"><path d="M9.5 3 L17 8.5 L9 18.5 L1.5 13z" fill="none" stroke="#1d8ce0" stroke-width="1.4"/><rect x="8" y="24" width="17" height="10" fill="none" stroke="#333" stroke-width="1.2" stroke-dasharray="2.5 1.8"/><path d="M20 22 C19 18 17 15 14 14" fill="none" stroke="#333" stroke-width="1.4"/><path d="M12 11 L17.5 12.5 L13.5 16.5z" fill="#333"/></svg>
<div class="bl" style="left:1041px;top:93px">Rotate</div>
<svg style="left:1103px;top:55px" width="18" height="16"><rect x="1.5" y="1.5" width="15" height="5" fill="none" stroke="#1d8ce0" stroke-width="1.2"/><rect x="1" y="10" width="8" height="5" fill="none" stroke="#333" stroke-dasharray="1.5 1"/><path d="M11 14 H13 V9" stroke="#333" fill="none" stroke-width="1.1"/></svg>
<svg style="left:1125px;top:55px" width="17" height="17"><circle cx="4.5" cy="4.5" r="3" fill="none" stroke="#1d8ce0" stroke-width="1.2"/><circle cx="12.5" cy="4.5" r="3" fill="none" stroke="#1d8ce0" stroke-width="1.2"/><circle cx="4.5" cy="12.5" r="3" fill="none" stroke="#1d8ce0" stroke-width="1.2"/><circle cx="12.5" cy="12.5" r="3" fill="none" stroke="#1d8ce0" stroke-width="1.2"/></svg>
<svg style="left:1103px;top:77px" width="17" height="17"><path d="M7 2 L1 15 H7z" fill="none" stroke="#333" stroke-dasharray="1.5 1"/><path d="M10 5 L16 15 H10z" fill="none" stroke="#1d8ce0" stroke-width="1.2"/></svg>
<svg style="left:1125px;top:78px" width="17" height="16"><path d="M1 1 V15 M5 1 V15 M1 1 H5 M1 15 H5" stroke="#333" stroke-dasharray="1 1"/><rect x="3" y="6" width="12" height="6" fill="none" stroke="#1d8ce0" stroke-width="1.2"/></svg>
<svg style="left:1106px;top:101px" width="12" height="15"><path d="M4 1 C0 4 6 7 2 10 C1 11 1 13 2 14 M9 1 C5 4 11 7 7 10 C6 11 6 13 7 14" fill="none" stroke="#333" stroke-width="1"/><path d="M9 1 C5 4 11 7 7 10 C6 11 6 13 7 14" fill="none" stroke="#1d8ce0" stroke-width="1.2"/></svg>
<svg style="left:1125px;top:100px" width="17" height="17"><path d="M1 1 V16" stroke="#333" stroke-dasharray="1 1"/><rect x="1.5" y="1.5" width="6" height="4" fill="none" stroke="#1d8ce0" stroke-width="1.1"/><rect x="4.5" y="6.5" width="6" height="4" fill="none" stroke="#1d8ce0" stroke-width="1.1"/><rect x="7.5" y="11.5" width="7" height="4" fill="none" stroke="#1d8ce0" stroke-width="1.1"/></svg>
<div class="cd" style="left:1148px;top:107px"></div>
<!-- Modify -->
<svg style="left:1175px;top:55px" width="34" height="34"><rect x="1.5" y="1.5" width="31" height="31" rx="1.5" fill="none" stroke="#333" stroke-width="2"/><path d="M2 16.5 H15 V32" fill="none" stroke="#1d8ce0" stroke-width="1.8" stroke-dasharray="2 2"/><path d="M18 15 L27 6" stroke="#111" stroke-width="1.8"/><path d="M21 4.5 L28.5 4 L28 11.5z" fill="#111"/></svg>
<div class="bl" style="left:1152px;top:93px">Modify</div>
<div class="bl" style="left:1152px;top:105px">Element</div>
<svg style="left:1224px;top:55px" width="34" height="34"><path d="M23 25.5 H2.5 V1.5 H26.5 V20" fill="none" stroke="#333" stroke-width="2"/><path d="M22 21 L31 30 M31 21 L22 30" stroke="#d42020" stroke-width="3.2"/></svg>
<div class="bl" style="left:1200px;top:93px">Break</div>
<div class="bl" style="left:1200px;top:105px">Element</div>
<svg style="left:1273px;top:55px" width="34" height="34"><path d="M9 1 V32 M25 1 V32 M1 11.5 H33 M1 20.5 H33" stroke="#2a2a2a" stroke-width="2"/><path d="M11 11.5 H23 M11 20.5 H23" stroke="#1d8ce0" stroke-width="1.8" stroke-dasharray="2 1.5"/></svg>
<div class="bl" style="left:1250px;top:93px">Trim</div>
<div class="bl" style="left:1250px;top:105px">Multiple</div>
<svg style="left:1317px;top:56px" width="17" height="15"><path d="M1 1 L16 14 M16 1 L1 14" stroke="#333" stroke-width="1"/><path d="M1 1 L8 7 M16 1 L9 7" stroke="#1d8ce0" stroke-width="1.1"/></svg>
<svg style="left:1317px;top:77px" width="17" height="16"><path d="M1 15 L9 8" stroke="#1d8ce0" stroke-width="1" stroke-dasharray="2 1.5"/><path d="M9 8 C12 3 15 5 16 8" fill="none" stroke="#333" stroke-width="1"/></svg>
<svg style="left:1317px;top:99px" width="17" height="17"><path d="M1 6 C6 5 10 8 11 16" fill="none" stroke="#1d8ce0" stroke-width="1.4"/><path d="M12 1 V12 M7 5 H16" stroke="#666" stroke-width="0.8" stroke-dasharray="1 1"/></svg>
<div class="cd" style="left:1341px;top:107px"></div>
<svg style="left:1352px;top:56px" width="17" height="15"><path d="M1 3 H6 L12 8 L6 13 H1" fill="none" stroke="#333" stroke-width="1.1"/><path d="M1 3 V13" stroke="#1d8ce0" stroke-dasharray="1.5 1"/><path d="M13 1 C15 1 15 3 13 4 H15" fill="none" stroke="#333" stroke-width="0.8"/></svg>
<div class="cd" style="left:1376px;top:63px"></div>
<svg style="left:1352px;top:78px" width="18" height="16"><path d="M9 1 C3 1 1 5 1 9 C1 14 5 15 8 13 C10 12 9 10 11 10 C15 10 17 8 17 6 C17 3 14 1 9 1z" fill="#b87a3a" stroke="#7a4a1a" stroke-width="0.6"/><circle cx="6" cy="5" r="1.3" fill="#e23"/><circle cx="10" cy="4" r="1.3" fill="#fc3"/><circle cx="5" cy="9" r="1.3" fill="#3a3"/><circle cx="13" cy="6" r="1.3" fill="#36c"/></svg>
<div class="cd" style="left:1376px;top:85px"></div>
<svg style="left:1354px;top:101px" width="14" height="14"><path d="M1.5 1.5 L12.5 12.5 M12.5 1.5 L1.5 12.5" stroke="#dd2222" stroke-width="2.8"/></svg>
<!-- Groups -->
<svg style="left:1399px;top:56px" width="30" height="32"><rect x="12" y="2" width="15" height="15" fill="none" stroke="#1d8ce0" stroke-width="2.5"/><path d="M3 13 C3 10 15 10 15 13 L21 28 H7 V14" fill="none" stroke="#1d8ce0" stroke-width="2.5"/><path d="M13 12 H16 L17 17 H13z" fill="#9cc8ee"/></svg>
<div class="bl" style="left:1376px;top:93px">Create</div>
<div class="bl" style="left:1376px;top:105px">Region</div>
<svg style="left:1440px;top:56px" width="17" height="15"><path d="M11 1 H3 V6 H7 V9 H3 V14 H16" fill="none" stroke="#1d8ce0" stroke-width="1.5"/></svg>
<svg style="left:1461px;top:55px" width="17" height="17"><path d="M1 4 V1 H4 M13 1 H16 V4 M16 13 V16 H13 M4 16 H1 V13" fill="none" stroke="#777" stroke-width="0.9"/><path d="M8 3 L13 11 H3z" fill="#7ab8e8"/><circle cx="11" cy="11" r="3.5" fill="#4a9ada"/></svg>
<div class="cd" style="left:1485px;top:63px;border-top-color:#ccc"></div>
<svg style="left:1440px;top:78px" width="17" height="16"><path d="M3 1 H12 L15 14 H3 V9 H8 V6 H3z" fill="none" stroke="#1d8ce0" stroke-width="1.5"/></svg>
<svg style="left:1461px;top:78px" width="17" height="17"><path d="M5 1 V16 M11 1 V16 M1 5 H16 M1 11 H16" stroke="#1d8ce0" stroke-width="1.6"/></svg>
<div class="cd" style="left:1485px;top:85px"></div>
<svg style="left:1440px;top:100px" width="17" height="17"><circle cx="8.5" cy="8.5" r="7" fill="none" stroke="#1d8ce0" stroke-width="1.4"/><circle cx="8.5" cy="8.5" r="3" fill="none" stroke="#1d8ce0" stroke-width="1.4"/></svg>
<svg style="left:1461px;top:99px" width="18" height="18"><path d="M3 1 V13 H12 M1 5 H6" stroke="#333" fill="none"/><circle cx="12" cy="8" r="4.5" fill="#fbe06a" stroke="#c8a020" stroke-width="0.8"/><rect x="10" y="12" width="4" height="5" fill="#7a8898"/></svg>
<div class="cd" style="left:1485px;top:107px"></div>
<!-- ===== title bar ===== -->
<div class="a" style="left:2px;top:5px;width:16px;height:16px;background:linear-gradient(135deg,#1a5fb0,#0b3a80);border-radius:2px"></div>
<svg style="left:2px;top:5px" width="16" height="16"><path d="M4 14 C6 10 7 6 8.5 3 M8.5 3 C8 6 7.5 9 9.5 9 C11 9 12.5 5 13.5 3 M13.5 3 C12.5 6 12 9 13.5 10" stroke="#fff" stroke-width="1.6" fill="none" stroke-linecap="round"/></svg>
<div class="a" style="left:22px;top:5px;width:1px;height:16px;background:#c8c8d0"></div>
<div class="a" style="left:27px;top:2px;width:160px;height:22px;background:#efeff3;border:1px solid #c9ccd8"></div>
<div class="t" style="left:31px;top:6px">Drawing</div>
<div class="dd" style="left:175px;top:11px"></div>
<!-- QAT -->
<svg style="left:192px;top:5px" width="16" height="16"><rect x="1" y="1" width="14" height="14" fill="#fff" stroke="#1e88d8" stroke-width="1.6"/><path d="M3.5 4.5 L6 12 L8 4.5" fill="none" stroke="#1e88d8" stroke-width="1.3"/><circle cx="10.8" cy="6.2" r="1.8" fill="none" stroke="#1e88d8" stroke-width="1.2"/><circle cx="10.8" cy="10.2" r="2.1" fill="none" stroke="#1e88d8" stroke-width="1.2"/></svg>
<div class="dd" style="left:211px;top:11px;border-top-color:#555"></div>
<svg style="left:226px;top:5px" width="17" height="15"><path d="M2 3 C2 1.5 3 1 4 1 H13 C14 1 15 1.5 15 3 V6 H2z" fill="#f8e0a0" stroke="#d09030" stroke-width="0.8"/><path d="M1 6 H16 L15 13 C15 14 14 14 13 14 H4 C3 14 2 14 2 13z" fill="#f6c860" stroke="#c88a28" stroke-width="0.9"/><path d="M4 9.5 H13" stroke="#e0a040" stroke-width="0.8" stroke-dasharray="1 1"/></svg>
<svg style="left:248px;top:5px" width="16" height="16"><rect x="0.5" y="0.5" width="15" height="15" rx="1" fill="#222"/><rect x="3" y="1" width="10" height="5" fill="#eee"/><rect x="3" y="9" width="10" height="6" fill="#555"/></svg>
<svg style="left:270px;top:5px" width="16" height="16"><rect x="0.5" y="0.5" width="15" height="15" rx="1" fill="#222"/><rect x="3" y="1" width="10" height="5" fill="#eee"/><circle cx="11" cy="11" r="4.5" fill="#8090a0" stroke="#f0f0f0"/></svg>
<svg style="left:292px;top:5px" width="16" height="16"><path d="M1 1 h8 l3 3 v11 h-11z" fill="#f4f4f4" stroke="#666"/><circle cx="11" cy="11" r="4.5" fill="#8090a0" stroke="#f0f0f0"/></svg>
<svg style="left:315px;top:6px" width="16" height="14"><path d="M2 6 L7 1 V4 C12 4 15 7 15 12 C13 9 11 8 7 8 V11 Z" fill="#2a7fd4"/></svg>
<div class="dd" style="left:336px;top:11px;border-top-color:#555"></div>
<svg style="left:351px;top:6px" width="16" height="14"><path d="M14 6 L9 1 V4 C4 4 1 7 1 12 C3 9 5 8 9 8 V11 Z" fill="#9cc6ee"/></svg>
<svg style="left:372px;top:4px" width="16" height="17"><path d="M9 1 l6 6 l-2 1 l-3 3 l1 3 l-2 1 l-3 -3 l-4 5 l-1 -1 l4 -4 l-3 -3 l1 -2 l3 1 l3 -3z" fill="#3a9a3a" stroke="#1e5e1e" stroke-width="0.8"/></svg>
<svg style="left:392px;top:4px" width="19" height="17"><path d="M5 1 H12 L14 3 V7 H5z" fill="#f4f4f4" stroke="#999" stroke-width="0.8"/><rect x="1" y="7" width="17" height="7" rx="1.5" fill="#e8e8e8" stroke="#777" stroke-width="0.9"/><rect x="2" y="9.5" width="15" height="1.6" fill="#3a9a3a"/><rect x="4" y="13" width="11" height="3" fill="#fff" stroke="#777" stroke-width="0.8"/></svg>
<svg style="left:419px;top:8px" width="8" height="10"><rect x="0.5" y="0" width="7" height="1.5" fill="#222"/><path d="M0.5 4 h7 l-3.5 4z" fill="#222"/></svg>
<div class="t" style="left:988px;top:6px;font-size:11.7px">test1.dwg [R2007 DWG] - MicroStation</div>
<!-- search -->
<div class="a" style="left:1555px;top:1px;width:193px;height:22px;background:#fff;border:1px solid #a8a8a8"></div>
<div class="a" style="left:1730px;top:2px;width:1px;height:20px;background:#d8d8d8"></div>
<div class="t" style="left:1560px;top:4px;font-size:11.2px;font-style:italic;color:#6a5a4a">Search Ribbon (F4)</div>
<svg style="left:1713px;top:4px" width="14" height="15"><circle cx="8.5" cy="5.5" r="3.8" fill="none" stroke="#1560b8" stroke-width="1.6"/><path d="M6 8 L2 13" stroke="#1560b8" stroke-width="2" stroke-linecap="round"/></svg>
<div class="dd" style="left:1735px;top:12px;border-top-color:#555;border-left-width:3px;border-right-width:3px;border-top-width:3px"></div>
<div class="a" style="left:1753px;top:0;width:25px;height:24px;background:#e9edf2"></div>
<svg style="left:1753px;top:1px" width="24" height="22"><path d="M12 2.5 C8 2.5 6.5 5.5 6.5 9 V13 L4.5 16 H19.5 L17.5 13 V9 C17.5 5.5 16 2.5 12 2.5Z" fill="#1f93d6"/><circle cx="12" cy="18" r="2" fill="#1f93d6"/><path d="M3 5 Q4 2 6 1 M21 5 Q20 2 18 1" stroke="#1f93d6" stroke-width="1.3" fill="none"/></svg>
<svg style="left:1778px;top:1px" width="23" height="23"><circle cx="11.5" cy="11.5" r="10" fill="none" stroke="#1f93d6" stroke-width="1.4"/><path d="M8.3 8.5 C8.3 5.8 14.7 5.5 14.7 8.8 C14.7 11 11.5 11 11.5 13.5" fill="none" stroke="#1f93d6" stroke-width="1.8"/><circle cx="11.5" cy="16.8" r="1.2" fill="#1f93d6"/></svg>
<div class="dd" style="left:1804px;top:10px;border-top-color:#666"></div>
<div class="a" style="left:1816px;top:1px;width:21px;height:21px;border-radius:50%;background:#2693d1"></div>
<div class="t" style="left:1819px;top:5px;color:#fff;font-size:12px;letter-spacing:-0.5px">IP</div>
<div class="dd" style="left:1840px;top:10px;border-top-color:#666"></div>
<div class="a" style="left:1861px;top:11px;width:10px;height:2px;background:#333"></div>
<svg style="left:1883px;top:5px" width="11" height="11"><rect x="0.5" y="2.5" width="8" height="8" fill="none" stroke="#333"/><path d="M2.5 2.5 V0.5 H10.5 V8.5 H8.5" fill="none" stroke="#333"/></svg>
<svg style="left:1904px;top:5px" width="11" height="11"><path d="M0.5 0.5 L10.5 10.5 M10.5 0.5 L0.5 10.5" stroke="#333" stroke-width="1.2"/></svg>
<!-- tabs -->
<div class="a" style="left:0;top:26px;width:46px;height:22px;background:#0072c6"></div>
<div class="t" style="left:14px;top:31px;color:#fff">File</div>
<div class="a" style="left:48px;top:26px;width:59px;height:23px;background:#fafafa;border:1px solid #d5d9e3;border-bottom:none"></div>
<div class="t" style="left:61px;top:31px">Home</div>
<div class="t" style="left:123px;top:31px">View</div>
<div class="t" style="left:177px;top:31px">Annotate</div>
<div class="t" style="left:255px;top:31px">Attach</div>
<div class="t" style="left:319px;top:31px">Analyze</div>
<div class="t" style="left:389px;top:31px">Curves</div>
<div class="t" style="left:454px;top:31px">Constraints</div>
<div class="t" style="left:543px;top:31px">Utilities</div>
<div class="t" style="left:611px;top:31px">Drawing Aids</div>
<div class="t" style="left:710px;top:31px">Content</div>
<div class="t" style="left:782px;top:31px">Collaborate</div>
<div class="t" style="left:872px;top:31px">Help</div>
<svg style="left:1900px;top:33px" width="11" height="7"><path d="M1 6 L5.5 1.5 L10 6" fill="none" stroke="#333" stroke-width="1.5"/></svg>
<!-- ===== toolboxes ===== -->
<div class="a" style="left:7px;top:147px;width:2px;height:2px;background:#8a8a8a"></div><div class="a" style="left:11px;top:147px;width:2px;height:2px;background:#8a8a8a"></div><div class="a" style="left:15px;top:147px;width:2px;height:2px;background:#8a8a8a"></div><div class="a" style="left:19px;top:147px;width:2px;height:2px;background:#8a8a8a"></div><div class="a" style="left:23px;top:147px;width:2px;height:2px;background:#8a8a8a"></div>
<div class="a" style="left:41px;top:147px;width:2px;height:2px;background:#8a8a8a"></div><div class="a" style="left:45px;top:147px;width:2px;height:2px;background:#8a8a8a"></div><div class="a" style="left:49px;top:147px;width:2px;height:2px;background:#8a8a8a"></div><div class="a" style="left:53px;top:147px;width:2px;height:2px;background:#8a8a8a"></div><div class="a" style="left:57px;top:147px;width:2px;height:2px;background:#8a8a8a"></div>
<div class="a" style="left:33px;top:145px;width:1px;height:371px;background:#e0e0e0"></div>
<svg style="left:5px;top:157px" width="23" height="21"><rect x="4" y="2" width="15.5" height="2" fill="#444"/><path d="M4.8 3 V13 M11.8 3 V13 M18.8 3 V13" stroke="#666" stroke-width="1.3"/><rect x="1.8" y="13" width="5" height="3.5" fill="#f4f4f4" stroke="#666" stroke-width="1.3"/><rect x="8.8" y="13" width="5.5" height="3.5" fill="#f4f4f4" stroke="#666" stroke-width="1.3"/><rect x="16.3" y="13" width="5" height="3.5" fill="#f4f4f4" stroke="#666" stroke-width="1.3"/></svg>
<svg style="left:27px;top:170px" width="4" height="6"><path d="M0 0 L4 3 L0 6z" fill="#111"/></svg>
<div class="a" style="left:3px;top:182px;width:27px;height:1px;background:#a8a8a8"></div>
<svg style="left:5px;top:189px" width="23" height="21"><text x="3" y="9" font-size="7" font-family="Liberation Mono" font-weight="bold" fill="#111">A-A</text><path d="M1 12 H21" stroke="#0a0" stroke-width="1.3"/></svg>
<svg style="left:27px;top:202px" width="4" height="6"><path d="M0 0 L4 3 L0 6z" fill="#111"/></svg>
<div class="a" style="left:3px;top:214px;width:27px;height:1px;background:#a8a8a8"></div>
<svg style="left:5px;top:221px" width="23" height="21"><path d="M11 0 V8" stroke="#80208a" stroke-width="1.5"/><path d="M8 5 L11 10 L14 5z" fill="#80208a"/><path d="M1 14 Q11 6 21 14" stroke="#222" stroke-dasharray="1 2" fill="none"/></svg>
<svg style="left:27px;top:234px" width="4" height="6"><path d="M0 0 L4 3 L0 6z" fill="#111"/></svg>
<div class="a" style="left:3px;top:246px;width:27px;height:1px;background:#a8a8a8"></div>
<svg style="left:5px;top:253px" width="23" height="21"><rect x="3" y="0" width="16" height="16" fill="#eee"/><path d="M3 0 L11 8 L19 0 V16 L11 8 L3 16z" fill="#777"/><path d="M3 16 L11 8 L19 16z" fill="#555"/></svg>
<svg style="left:27px;top:266px" width="4" height="6"><path d="M0 0 L4 3 L0 6z" fill="#111"/></svg>
<div class="a" style="left:3px;top:278px;width:27px;height:1px;background:#a8a8a8"></div>
<svg style="left:5px;top:285px" width="23" height="21"><rect x="1" y="1" width="19" height="16" fill="#fff" stroke="#111" stroke-width="1.3"/><rect x="1" y="1" width="19" height="3" fill="#0a10b0"/><path d="M4 7 H18 M4 10 H18 M4 13 H18" stroke="#226" stroke-dasharray="1 2"/><path d="M11 6 V14 M7 10 H15" stroke="#0a0" stroke-width="2.2"/></svg>
<svg style="left:27px;top:298px" width="4" height="6"><path d="M0 0 L4 3 L0 6z" fill="#111"/></svg>
<div class="a" style="left:3px;top:310px;width:27px;height:1px;background:#a8a8a8"></div>
<svg style="left:5px;top:317px" width="23" height="21"><path d="M11 0 V20 M5 6 L11 2 L17 6 M4 10 L11 5 L18 10 M3 14 L11 8 L19 14" stroke="#2040f0" stroke-dasharray="1.5 1.2" fill="none" stroke-width="1.2"/></svg>
<svg style="left:27px;top:330px" width="4" height="6"><path d="M0 0 L4 3 L0 6z" fill="#111"/></svg>
<div class="a" style="left:3px;top:342px;width:27px;height:1px;background:#a8a8a8"></div>
<svg style="left:5px;top:349px" width="23" height="21"><path d="M1 4 Q6 9 11 4 Q16 9 21 4 M1 7 Q6 12 11 7 Q16 12 21 7" stroke="#2a3aa0" fill="none" stroke-width="1.2"/><path d="M1 4 V14 M11 4 V14 M21 4 V14" stroke="#888"/></svg>
<svg style="left:27px;top:362px" width="4" height="6"><path d="M0 0 L4 3 L0 6z" fill="#111"/></svg>
<div class="a" style="left:3px;top:374px;width:27px;height:1px;background:#a8a8a8"></div>
<svg style="left:5px;top:381px" width="23" height="21"><path d="M9 1 H13 V6 L16 15 H6 L9 6z" fill="none" stroke="#1030e0" stroke-width="1.6"/><path d="M7 11 L15 15 M15 11 L7 15" stroke="#1030e0" stroke-width="1.3"/></svg>
<svg style="left:27px;top:394px" width="4" height="6"><path d="M0 0 L4 3 L0 6z" fill="#111"/></svg>
<div class="a" style="left:3px;top:406px;width:27px;height:1px;background:#a8a8a8"></div>
<svg style="left:5px;top:413px" width="23" height="21"><rect x="1" y="1" width="20" height="17" fill="#fff" stroke="#111" stroke-width="1.3"/><rect x="1" y="1" width="20" height="3" fill="#777"/><path d="M3 7 Q11 11 19 7" stroke="#1030e0" fill="none"/><path d="M3 16 H19" stroke="#c00" stroke-width="1.2"/><path d="M6 15 l2 -3 l2 3 M13 15 l2 -3 l2 3" stroke="#0a0" fill="none"/></svg>
<svg style="left:27px;top:426px" width="4" height="6"><path d="M0 0 L4 3 L0 6z" fill="#111"/></svg>
<div class="a" style="left:3px;top:438px;width:27px;height:1px;background:#a8a8a8"></div>
<svg style="left:5px;top:445px" width="23" height="21"><path d="M1 3 Q10 3 17 9" stroke="#1030e0" fill="none" stroke-width="1.3"/><path d="M1 5.5 Q10 5.5 17 11" stroke="#1030e0" fill="none"/><path d="M17 5 V15 M12 10 H22" stroke="#111" stroke-width="1.1"/></svg>
<svg style="left:27px;top:458px" width="4" height="6"><path d="M0 0 L4 3 L0 6z" fill="#111"/></svg>
<div class="a" style="left:3px;top:470px;width:27px;height:1px;background:#a8a8a8"></div>
<svg style="left:5px;top:477px" width="23" height="21"><rect x="1" y="10" width="20" height="8" fill="#777"/><path d="M2 14 H20" stroke="#fff" stroke-dasharray="3 2"/><circle cx="12" cy="6" r="4.5" fill="#ff0" stroke="#880"/><rect x="10" y="10" width="4" height="5" fill="#333"/></svg>
<svg style="left:27px;top:490px" width="4" height="6"><path d="M0 0 L4 3 L0 6z" fill="#111"/></svg>
<div class="a" style="left:3px;top:502px;width:27px;height:1px;background:#a8a8a8"></div>
<svg style="left:5px;top:509px" width="23" height="21"><rect x="1" y="4" width="20" height="10" fill="#888"/><path d="M1 4 H21 M1 14 H21" stroke="#1030e0" stroke-width="1.8"/><path d="M2 9 H20" stroke="#1030e0" stroke-dasharray="3 2.5" stroke-width="1.2"/></svg>
<svg style="left:27px;top:522px" width="4" height="6"><path d="M0 0 L4 3 L0 6z" fill="#111"/></svg>
<div class="a" style="left:3px;top:534px;width:27px;height:1px;background:#a8a8a8"></div>
<svg style="left:5px;top:541px" width="23" height="21"><path d="M3 5 L9 1 L14 4 V9 L7 12 L3 10z" fill="#ff0" stroke="#222" stroke-width="0.8"/><path d="M3 5 L7 8 V12 L3 10z" fill="#887700"/><path d="M9 13 L19 8 L21 10 V14 L11 18 L9 16z" fill="#ff0" stroke="#222" stroke-width="0.8"/><path d="M9 13 L11 15 V18 L9 16z" fill="#887700"/></svg>
<svg style="left:27px;top:554px" width="4" height="6"><path d="M0 0 L4 3 L0 6z" fill="#111"/></svg>
<div class="a" style="left:3px;top:566px;width:27px;height:1px;background:#a8a8a8"></div>
<svg style="left:5px;top:573px" width="23" height="21"><rect x="2" y="2" width="7" height="15" fill="#ff0" stroke="#222"/><rect x="11" y="2" width="8" height="15" fill="#fff" stroke="#222"/><rect x="10" y="1" width="10" height="17" fill="none" stroke="#e00" stroke-dasharray="1.5 1.2"/></svg>
<svg style="left:27px;top:586px" width="4" height="6"><path d="M0 0 L4 3 L0 6z" fill="#111"/></svg>
<div class="a" style="left:3px;top:598px;width:27px;height:1px;background:#a8a8a8"></div>
<svg style="left:5px;top:605px" width="23" height="21"><rect x="2" y="2" width="18" height="16" fill="#fff" stroke="#111" stroke-width="1.3"/><path d="M2 7 H20 M11 7 V18" stroke="#111" stroke-width="1.3"/></svg>
<svg style="left:27px;top:618px" width="4" height="6"><path d="M0 0 L4 3 L0 6z" fill="#111"/></svg>
<div class="a" style="left:3px;top:630px;width:27px;height:1px;background:#a8a8a8"></div>
<svg style="left:5px;top:637px" width="23" height="21"><path d="M2 4 H11 V1 H20 V15 H13 V18 H2z" fill="#fff" stroke="#111" stroke-width="1.2"/><path d="M5 7 H17 M5 10 H17 M5 13 H17" stroke="#90209a" stroke-width="1.3" stroke-dasharray="2 1"/></svg>
<svg style="left:27px;top:650px" width="4" height="6"><path d="M0 0 L4 3 L0 6z" fill="#111"/></svg>
<div class="a" style="left:3px;top:662px;width:27px;height:1px;background:#a8a8a8"></div>
<svg style="left:5px;top:669px" width="23" height="21"><path d="M11 1 L8 7 H14z M5 6 L2 12 H8z M17 6 L14 12 H20z" fill="none" stroke="#2a2" stroke-width="1"/><path d="M11 4 V12 M5 9 V16 M17 9 V16" stroke="#a05a2a"/></svg>
<svg style="left:27px;top:682px" width="4" height="6"><path d="M0 0 L4 3 L0 6z" fill="#111"/></svg>
<div class="a" style="left:3px;top:694px;width:27px;height:1px;background:#a8a8a8"></div>
<svg style="left:5px;top:701px" width="23" height="21"><rect x="3" y="1" width="17" height="18" fill="#fff" stroke="#111" stroke-width="1.3"/><path d="M3 2 H7 M3 4 H10 M3 6 H12 M3 8 H13 M3 10 H13 M3 12 H12 M3 14 H10 M3 16 H7 M3 18 H6" stroke="#0a6a6a" stroke-width="1.2"/></svg>
<svg style="left:27px;top:714px" width="4" height="6"><path d="M0 0 L4 3 L0 6z" fill="#111"/></svg>
<svg style="left:39px;top:157px" width="23" height="21"><rect x="4" y="2" width="15" height="2" fill="#111"/><path d="M5 3 V12 M12 3 V12 M19 3 V12" stroke="#111" stroke-width="1.3"/><rect x="1.8" y="11.8" width="5" height="4" fill="#fff" stroke="#111" stroke-width="1.4"/><rect x="8.8" y="11.8" width="5.5" height="4" fill="#fff" stroke="#111" stroke-width="1.4"/><rect x="16.3" y="11.8" width="5" height="4" fill="#fff" stroke="#111" stroke-width="1.4"/></svg>
<svg style="left:61px;top:171px" width="4" height="6"><path d="M0 0 L4 3 L0 6z" fill="#111"/></svg>
<svg style="left:39px;top:185px" width="23" height="21"><path d="M3.5 6 V22 M6.5 8 V22 M3.5 6 H23 M6.5 8.5 H23" stroke="#111" stroke-width="1.1" fill="none"/><path d="M1.5 8 V22" stroke="#666" stroke-dasharray="1 1" stroke-width="1.6"/><path d="M1.5 4 H3.5 V1 M6.5 1 V4 H16 V1 M18 1 V4 H23" stroke="#111" stroke-width="1" fill="none"/><path d="M9.5 14.5 L13 11 L16.5 14.5z" fill="#888" stroke="#2030e0" stroke-width="1"/></svg>
<svg style="left:61px;top:199px" width="4" height="6"><path d="M0 0 L4 3 L0 6z" fill="#111"/></svg>
<svg style="left:39px;top:213px" width="23" height="21"><path d="M11 0 V6 M11 13 V19" stroke="#0a8a8a" stroke-width="1.4"/><path d="M8 4 L11 8 L14 4z M8 15 L11 11 L14 15z" fill="#0a8a8a"/><path d="M1 11 Q6 7 11 10 Q16 12 21 8" stroke="#111" fill="none"/></svg>
<svg style="left:61px;top:227px" width="4" height="6"><path d="M0 0 L4 3 L0 6z" fill="#111"/></svg>
<svg style="left:39px;top:241px" width="23" height="21"><text x="1" y="7" font-size="7" font-family="Liberation Mono" font-weight="bold" fill="#80208a">5.0%</text><path d="M17 4 H21" stroke="#80208a"/><path d="M1 9 H22" stroke="#111"/></svg>
<svg style="left:61px;top:255px" width="4" height="6"><path d="M0 0 L4 3 L0 6z" fill="#111"/></svg>
<svg style="left:39px;top:269px" width="23" height="21"><rect x="3" y="1" width="17" height="17" fill="none" stroke="#666"/><path d="M3 18 L20 1" stroke="#ee0" stroke-width="1.6"/><rect x="2" y="0" width="2.5" height="2.5" fill="#fff" stroke="#111" stroke-width="0.8"/><rect x="18.5" y="0" width="2.5" height="2.5" fill="#fff" stroke="#111" stroke-width="0.8"/><rect x="2" y="17" width="2.5" height="2.5" fill="#fff" stroke="#111" stroke-width="0.8"/><rect x="18.5" y="17" width="2.5" height="2.5" fill="#fff" stroke="#111" stroke-width="0.8"/></svg>
<svg style="left:61px;top:283px" width="4" height="6"><path d="M0 0 L4 3 L0 6z" fill="#111"/></svg>
<svg style="left:39px;top:297px" width="23" height="21"><rect x="1" y="1" width="20" height="19" fill="none" stroke="#444" stroke-dasharray="1 1.5"/><path d="M11 2 V7 M11 13 V18" stroke="#80208a" stroke-width="2"/><path d="M8 5 L11 9 L14 5z M8 15 L11 11 L14 15z" fill="#80208a"/><path d="M3 10 H19" stroke="#111" stroke-width="1.2"/></svg>
<svg style="left:61px;top:311px" width="4" height="6"><path d="M0 0 L4 3 L0 6z" fill="#111"/></svg>
<svg style="left:39px;top:325px" width="23" height="21"><path d="M1 5 Q11 -2 21 3 M1 9 Q11 1 21 7 M3 13 Q8 5 17 10 Q20 14 13 15 Q6 16 8 11" stroke="#2030c0" fill="none" stroke-width="1.1"/><path d="M2 7 Q11 0 20 5 M4 16 Q2 8 14 9" stroke="#c02020" fill="none" stroke-width="1.1"/></svg>
<svg style="left:61px;top:339px" width="4" height="6"><path d="M0 0 L4 3 L0 6z" fill="#111"/></svg>
<svg style="left:39px;top:353px" width="23" height="21"><path d="M2 2 H20 V9 H12 V14 H20 V19 H2 V12 H8 V6 H2z" fill="none" stroke="#2030c0" stroke-dasharray="2 1.5" stroke-width="1.2"/><rect x="18" y="17" width="2" height="2" fill="#e00"/></svg>
<svg style="left:61px;top:367px" width="4" height="6"><path d="M0 0 L4 3 L0 6z" fill="#111"/></svg>
<svg style="left:39px;top:381px" width="23" height="21"><text x="3" y="7" font-size="7" font-family="Liberation Mono" font-weight="bold" fill="#111">A-A</text><path d="M1 10 H21" stroke="#0a0" stroke-width="1.3"/></svg>
<svg style="left:61px;top:395px" width="4" height="6"><path d="M0 0 L4 3 L0 6z" fill="#111"/></svg>
<svg style="left:39px;top:409px" width="23" height="21"><path d="M3 6 L8 1 H20 L15 6z" fill="#1a8a8a" stroke="#111" stroke-width="0.8"/><path d="M3 16 L8 11 H20 L15 16z" fill="#1a8a8a" stroke="#111" stroke-width="0.8"/><path d="M3 6 V16 M15 6 V16 M20 1 V11 M8 1 V11" stroke="#90209a" stroke-width="1.1"/></svg>
<svg style="left:61px;top:423px" width="4" height="6"><path d="M0 0 L4 3 L0 6z" fill="#111"/></svg>
<svg style="left:39px;top:437px" width="23" height="21"><rect x="2" y="1" width="18" height="19" fill="#fff" stroke="#111" stroke-width="1.3"/><rect x="3" y="2" width="16" height="5" fill="#6c6"/><rect x="3" y="14" width="16" height="5" fill="#999"/><path d="M2 7.5 H20 M2 13.5 H20" stroke="#111"/></svg>
<svg style="left:61px;top:451px" width="4" height="6"><path d="M0 0 L4 3 L0 6z" fill="#111"/></svg>
<svg style="left:39px;top:465px" width="23" height="21"><path d="M1 3 Q14 3 18 19" stroke="#111" fill="none" stroke-width="1.2"/><circle cx="12" cy="8" r="2" fill="none" stroke="#0a8a8a"/><path d="M12 1 V15 M5 8 H19" stroke="#0a8a8a" stroke-width="1.1"/></svg>
<svg style="left:61px;top:479px" width="4" height="6"><path d="M0 0 L4 3 L0 6z" fill="#111"/></svg>
<svg style="left:39px;top:493px" width="23" height="21"><circle cx="11" cy="10" r="9" fill="#fff" stroke="#111" stroke-width="1.3"/><path d="M11 10 L2.5 6.5 A9 9 0 0 0 8 18.5z" fill="#0a6a0a"/><path d="M11 10 L8 18.5 A9 9 0 0 0 19.5 13z" fill="#1030e0"/><path d="M11 10 L13 1.2" stroke="#111"/></svg>
<svg style="left:61px;top:507px" width="4" height="6"><path d="M0 0 L4 3 L0 6z" fill="#111"/></svg>
<!-- ===== bottom toolbar ===== -->
<div class="a" style="left:2px;top:986px;width:2px;height:2px;background:#999;box-shadow:0 4px #999,0 8px #999,0 12px #999,0 16px #999"></div>
<svg style="left:9px;top:982px" width="26" height="26"><circle cx="13" cy="13" r="11.5" fill="#d8d8d8" stroke="#bdbdbd" stroke-width="1.2"/><path d="M3 13 L12 5 V10 H20 V16 H12 V21z" fill="#f4f4f4" stroke="#c4c4c4" stroke-width="0.8"/></svg>
<div class="dd" style="left:40px;top:993px;border-top-color:#777"></div>
<svg style="left:53px;top:982px" width="26" height="26"><circle cx="13" cy="13" r="11.5" fill="#d8d8d8" stroke="#bdbdbd" stroke-width="1.2"/><path d="M23 13 L14 5 V10 H6 V16 H14 V21z" fill="#f4f4f4" stroke="#c4c4c4" stroke-width="0.8"/></svg>
<div class="dd" style="left:83px;top:993px;border-top-color:#777"></div>
<svg style="left:95px;top:984px" width="26" height="22"><ellipse cx="12.5" cy="15" rx="12" ry="6" fill="#c8c8c8" stroke="#b8b8b8"/><ellipse cx="12.5" cy="13" rx="10" ry="4.5" fill="#d8d8d8" stroke="#bbb"/><path d="M3 1 L12 12" stroke="#aaa" stroke-width="2"/></svg>
<div class="dd" style="left:126px;top:993px;border-top-color:#777"></div>
<div class="a" style="left:138px;top:985px;width:148px;height:21px;background:#e6e6e6;border:1px solid #adadad"></div>
<svg style="left:142px;top:987px" width="18" height="17"><path d="M1.5 11 V1.5 H12 V4" fill="none" stroke="#1d8ce0" stroke-width="1.6"/><rect x="5" y="5" width="11" height="10" fill="none" stroke="#1d8ce0" stroke-width="1.6"/><rect x="5" y="5" width="11" height="3" fill="#1d8ce0"/></svg>
<div class="t" style="left:162px;top:989px">Model</div>
<div class="dd" style="left:273px;top:994px;border-top-color:#111;border-left-width:4px;border-right-width:4px;border-top-width:4.5px"></div>
<div class="a" style="left:290px;top:982px;width:1px;height:26px;background:#c8c8c8"></div>
<div class="a" style="left:294px;top:983px;width:26px;height:24px;background:#e0e0e0;border:1px solid #c8c8c8"></div>
<svg style="left:296px;top:985px" width="22" height="20"><path d="M1.5 12 V1.5 H14 V4" fill="none" stroke="#1d8ce0" stroke-width="1.6"/><path d="M4.5 15 V4.5 H17 V7" fill="none" stroke="#1d8ce0" stroke-width="1.6"/><rect x="7.5" y="7.5" width="13" height="11" fill="#fff" stroke="#1d8ce0" stroke-width="1.6"/></svg>
<div class="a" style="left:323px;top:982px;width:1px;height:26px;background:#c8c8c8"></div>
<div class="a" style="left:327px;top:985px;width:14px;height:21px;background:#7aa8dc;border:1px solid #3a78b8"></div>
<div class="t" style="left:330px;top:989px;font-size:12px">1</div>
<div class="a" style="left:342px;top:985px;width:1px;height:21px;background:#333"></div>
<div class="t" style="left:346px;top:989px">2</div>
<div class="a" style="left:358px;top:985px;width:1px;height:21px;background:#333"></div>
<div class="t" style="left:362px;top:989px">3</div>
<div class="a" style="left:374px;top:985px;width:1px;height:21px;background:#333"></div>
<div class="t" style="left:378px;top:989px">4</div>
<div class="a" style="left:390px;top:985px;width:1px;height:21px;background:#333"></div>
<div class="t" style="left:394px;top:989px">5</div>
<div class="a" style="left:406px;top:985px;width:1px;height:21px;background:#333"></div>
<div class="t" style="left:410px;top:989px">6</div>
<div class="a" style="left:422px;top:985px;width:1px;height:21px;background:#333"></div>
<div class="t" style="left:426px;top:989px">7</div>
<div class="a" style="left:438px;top:985px;width:1px;height:21px;background:#333"></div>
<div class="t" style="left:442px;top:989px">8</div>
<div class="a" style="left:453px;top:985px;width:1px;height:21px;background:#bbb"></div>
<!-- ===== status bar ===== -->
<div class="t" style="left:3px;top:1020px">Element Selection &gt; Identify element to add to set</div>
<div class="a" style="left:292px;top:1016px;width:2px;height:2px;background:#999;box-shadow:0 4px #999,0 8px #999,0 12px #999,0 16px #999"></div>
<div class="a" style="left:296px;top:1014px;width:1px;height:26px;background:#c8c8c8"></div>
<svg style="left:320px;top:1016px" width="8" height="22"><path d="M4.5 2 V20" stroke="#222" stroke-width="1"/><path d="M1.5 4 L4.5 1 L4.5 4z" fill="#222"/></svg>
<style>.ss{position:absolute;top:1015px;width:1px;height:21px;background:#666}</style>
<div class="ss" style="left:1305px"></div><div class="ss" style="left:1334px"></div><div class="ss" style="left:1364px"></div><div class="ss" style="left:1497px"></div><div class="ss" style="left:1615px"></div><div class="ss" style="left:1645px"></div><div class="ss" style="left:1675px"></div><div class="ss" style="left:1705px"></div><div class="ss" style="left:1736px"></div><div class="ss" style="left:1766px"></div><div class="ss" style="left:1796px"></div><div class="ss" style="left:1826px"></div><div class="ss" style="left:1855px"></div><div class="ss" style="left:1885px"></div>
<svg style="left:1312px;top:1017px" width="18" height="18"><path d="M3 15 L11 11 L15 3" fill="none" stroke="#1d8ce0" stroke-width="1.3"/><circle cx="3" cy="15" r="1.8" fill="#fff" stroke="#1d8ce0" stroke-width="1.2"/><circle cx="15" cy="3" r="1.8" fill="#fff" stroke="#1d8ce0" stroke-width="1.2"/></svg>
<svg style="left:1342px;top:1017px" width="16" height="17"><path d="M4 8 V5 C4 1 12 1 12 5 V8" fill="none" stroke="#777" stroke-width="1.6"/><rect x="2" y="8" width="12" height="8" fill="#d0b030" stroke="#8a7010" stroke-width="0.8"/></svg>
<div class="t" style="left:1368px;top:1020px">0</div>
<svg style="left:1652px;top:1017px" width="17" height="17"><path d="M1 1 H16 V11 L11 16 H1z" fill="#1d8ce0"/><path d="M4 1 V16 M8 1 V16 M12 1 V12 M1 5 H16 M1 9 H16 M1 13 H12" stroke="#fff" stroke-width="0.9"/></svg>
<svg style="left:1683px;top:1017px" width="16" height="16"><rect x="0.5" y="0.5" width="15" height="15" rx="1" fill="#222"/><rect x="3" y="1" width="10" height="5" fill="#eee"/><rect x="3" y="9" width="10" height="6" fill="#555"/><rect x="9" y="11" width="2" height="3" fill="#ccc"/></svg>
<svg style="left:1712px;top:1017px" width="18" height="17"><path d="M4 2 H15 C17 2 17 5 15 5 L13 5 V14 C13 16 11 16 10 16 H2 C0 16 0 13 2 13 H4z" fill="none" stroke="#aaa" stroke-width="1.2"/></svg>
<svg style="left:1801px;top:1016px" width="19" height="19"><rect x="3" y="2" width="11" height="14" fill="#1d8ce0"/><path d="M3 4 H1 M3 7 H1 M3 10 H1 M3 13 H1" stroke="#1d8ce0"/><path d="M6 1 V4 M9 1 V4" stroke="#fff"/><circle cx="14" cy="14" r="4" fill="#fff" stroke="#d42" stroke-width="1.5"/><path d="M11.5 16.5 L16.5 11.5" stroke="#d42" stroke-width="1.5"/></svg>
<svg style="left:1862px;top:1017px" width="17" height="17"><path d="M1 2 L15 1 L14 15 L3 16z" fill="none" stroke="#aaa"/><path d="M5 6 L8 4 H12 V10 L9 12 H5z" fill="none" stroke="#999" stroke-width="1.2"/></svg>
<svg style="left:1891px;top:1016px" width="21" height="20"><circle cx="8" cy="8" r="7" fill="#1d8ce0"/><path d="M1 8 H15 M8 1 V15 M2 4.5 H14 M2 11.5 H14" stroke="#fff" stroke-width="0.9"/><ellipse cx="8" cy="8" rx="3.5" ry="7" fill="none" stroke="#fff" stroke-width="0.9"/><path d="M12 12 L19 19 M19 12 L12 19" stroke="#e02020" stroke-width="2.6"/></svg>
<div class="a" style="left:1470px;top:1041px;width:159px;height:3px;background:#3a3a3a"></div>
<!-- ===== Element Selection dialog ===== -->
<div class="a" style="left:1639px;top:243px;width:272px;height:119px;background:#f0f0f0"></div>
<div class="a" style="left:1639px;top:243px;width:272px;height:30px;background:#fff"></div>
<svg style="left:1646px;top:249px" width="18" height="17"><path d="M2 15 L9 8 C8 5 10 2 13 2 L11 4.5 L12.5 6 L15 4 C15 7 12 9 10 8.5 L3.5 16z" fill="#555" stroke="#333" stroke-width="0.8"/><circle cx="12.5" cy="12.5" r="3.5" fill="#ccc" stroke="#777"/><circle cx="12.5" cy="12.5" r="1.3" fill="#fff"/></svg>
<div class="t" style="left:1668px;top:251px;font-size:11.6px;color:#9a8888">Element Selection</div>
<div class="a" style="left:1792px;top:257px;width:10px;height:1px;background:#777"></div>
<div class="a" style="left:1837px;top:252px;width:10px;height:10px;border:1px solid #ddd"></div>
<svg style="left:1882px;top:251px" width="12" height="12"><path d="M1 1 L11 11 M11 1 L1 11" stroke="#555" stroke-width="1"/></svg>
<div class="a" style="left:1650px;top:285px;width:110px;height:26px;border:1px solid #b8b8b8;border-right-color:#fff;border-bottom-color:#fff;background:#f0f0f0"></div>
<div class="a" style="left:1653px;top:288px;width:20px;height:20px;background:#6fa7de;border:1px solid #3a78c0"></div>
<svg style="left:1655px;top:290px" width="16" height="16"><circle cx="8" cy="8" r="4.5" fill="none" stroke="#fff" stroke-width="1.3"/><path d="M8 1.5 V14.5 M1.5 8 H14.5" stroke="#fff" stroke-width="1.3"/></svg>
<svg style="left:1676px;top:291px" width="16" height="14"><rect x="1" y="3" width="14" height="8" fill="none" stroke="#1d8ce0" stroke-width="1.4" stroke-dasharray="2.5 1.5"/></svg>
<svg style="left:1697px;top:291px" width="16" height="14"><path d="M4 3 H15 L12 11 H1z" fill="none" stroke="#1d8ce0" stroke-width="1.4" stroke-dasharray="2.5 1.5"/></svg>
<svg style="left:1718px;top:290px" width="16" height="16"><circle cx="8" cy="8" r="6.5" fill="none" stroke="#1d8ce0" stroke-width="1.4" stroke-dasharray="2.5 1.5"/></svg>
<svg style="left:1739px;top:290px" width="16" height="16"><path d="M1.5 14.5 L14.5 1.5" stroke="#1d8ce0" stroke-width="1.5" stroke-dasharray="3 1.5"/></svg>
<svg style="left:1781px;top:286px" width="24" height="22"><defs><linearGradient id="bg1" x1="0" y1="0" x2="1" y2="1"><stop offset="0" stop-color="#7cc4f4"/><stop offset="1" stop-color="#0a4aa0"/></linearGradient></defs><rect x="1" y="1" width="15" height="15" fill="url(#bg1)" stroke="#111" stroke-width="1.3"/><circle cx="17.5" cy="16.5" r="4.8" fill="#fff" stroke="#d01010" stroke-width="1.8"/><path d="M14.5 19.5 L20.5 13.5" stroke="#d01010" stroke-width="1.8"/></svg>
<div class="a" style="left:1650px;top:326px;width:110px;height:26px;border:1px solid #b8b8b8;border-right-color:#fff;border-bottom-color:#fff;background:#f0f0f0"></div>
<div class="a" style="left:1653px;top:329px;width:20px;height:20px;background:#6fa7de;border:1px solid #3a78c0"></div>
<svg style="left:1655px;top:331px" width="16" height="16"><path d="M3 3 L6 6 M13 3 L10 6 M8 1 V5 M1 8 H5" stroke="#fff" stroke-width="1"/><path d="M7 6 V15 L9 13 L11 16.5 L12.5 15.8 L10.8 12.5 L13.5 12.5z" fill="#111" stroke="#fff" stroke-width="0.5"/></svg>
<svg style="left:1676px;top:331px" width="16" height="16"><path d="M8 2 V14 M2 8 H14" stroke="#1d8ce0" stroke-width="3" stroke-linecap="round"/></svg>
<svg style="left:1697px;top:331px" width="16" height="16"><path d="M2 8 H14" stroke="#1d8ce0" stroke-width="3" stroke-linecap="round"/></svg>
<svg style="left:1718px;top:331px" width="16" height="16"><rect x="1" y="1" width="14" height="14" rx="1.5" fill="#fff" stroke="#1d8ce0" stroke-width="1.5"/><path d="M15 1 V15 H1z" fill="#1d8ce0"/></svg>
<svg style="left:1739px;top:331px" width="17" height="17"><circle cx="8.5" cy="8.5" r="7" fill="none" stroke="#1d8ce0" stroke-width="1.5" stroke-dasharray="2.5 1.5"/><circle cx="8.5" cy="5.5" r="1.3" fill="#333"/><circle cx="5.8" cy="10" r="1.3" fill="#333"/><circle cx="11.2" cy="10" r="1.3" fill="#333"/></svg>
<svg style="left:1781px;top:327px" width="26" height="24"><defs><linearGradient id="bg2" x1="0" y1="0" x2="1" y2="1"><stop offset="0" stop-color="#d8d8d8"/><stop offset="1" stop-color="#888"/></linearGradient></defs><rect x="1" y="1" width="16" height="16" fill="url(#bg2)" stroke="#666" stroke-width="1"/><path d="M16 10 V22 L18.5 19.5 L20.5 23.5 L22 22.8 L20 19 L23.5 19z" fill="#777" stroke="#eee" stroke-width="0.6"/></svg>
<svg style="left:1889px;top:342px" width="10" height="7"><path d="M0.5 0.5 H9.5 L5 6z" fill="#111"/></svg>
<!-- ===== LAS dialog ===== -->
<style>.lr{position:absolute;white-space:nowrap;line-height:14px;font-size:12.3px;text-align:right}.lh{position:absolute;white-space:nowrap;line-height:14px;font-size:11px;font-weight:bold;text-align:right;color:#111}</style>
<div class="a" style="left:1309px;top:408px;width:576px;height:411px;background:#e8e8e8"></div>
<div class="a" style="left:1309px;top:408px;width:576px;height:48px;background:#fff"></div>
<div class="t" style="left:1317px;top:416px;font-size:11.4px">ppk_cloud_1.las - 134 804 014 points</div>
<div class="t" style="left:1316px;top:441px">File</div>
<div class="t" style="left:1348px;top:441px">Output</div>
<div class="t" style="left:1400px;top:441px">Point</div>
<div class="t" style="left:1442px;top:441px">View</div>
<div class="t" style="left:1481px;top:441px">Classify</div>
<div class="t" style="left:1535px;top:441px">Group</div>
<div class="t" style="left:1582px;top:441px">Tools</div>
<div class="t" style="left:1623px;top:441px">Line</div>
<div class="t" style="left:1659px;top:441px">Wizard</div>
<div class="a" style="left:1317px;top:467px;width:560px;height:24px;background:#ebe3e3;border:1px solid #9a9a9a;border-bottom:2px solid #8a8a8a"></div>
<div class="t" style="left:1326px;top:472px;font-size:11px;font-weight:bold;color:#111">Class</div>
<div class="lh" style="left:1391px;top:472px;width:100px">Easting</div>
<div class="lh" style="left:1527px;top:472px;width:100px">Northing</div>
<div class="lh" style="left:1618px;top:472px;width:100px">Elevation</div>
<div class="lh" style="left:1754px;top:472px;width:100px">Image</div>
<div class="a" style="left:1317px;top:490px;width:542px;height:282px;background:#fff;border-left:2px solid #8a8a8a"></div>
<div class="a" style="left:1859px;top:490px;width:18px;height:282px;background:#f0f0f0"></div>
<svg style="left:1864px;top:496px" width="9" height="6"><path d="M1 5 L4.5 1.5 L8 5" fill="none" stroke="#555" stroke-width="1.6"/></svg>
<div class="a" style="left:1861px;top:507px;width:15px;height:17px;background:#cdcdcd"></div>
<svg style="left:1864px;top:761px" width="9" height="6"><path d="M1 1 L4.5 4.5 L8 1" fill="none" stroke="#555" stroke-width="1.6"/></svg>
<div class="a" style="left:1322px;top:495px;width:533px;height:16px;background:#000"></div>
<div class="t" style="left:1334px;top:496px;font-size:12.3px;color:#fff">0</div>
<div class="lr" style="left:1391px;top:496px;width:100px;color:#fff">273667.81</div>
<div class="lr" style="left:1527px;top:496px;width:100px;color:#fff">4336531.05</div>
<div class="lr" style="left:1618px;top:496px;width:100px;color:#fff">+134.42</div>
<div class="a" style="left:1850px;top:503px;width:4px;height:1px;background:#fff"></div>
<div class="t" style="left:1334px;top:515px;font-size:12.3px;color:#111">0</div>
<div class="lr" style="left:1391px;top:515px;width:100px;color:#111">273668.06</div>
<div class="lr" style="left:1527px;top:515px;width:100px;color:#111">4336530.01</div>
<div class="lr" style="left:1618px;top:515px;width:100px;color:#111">+134.37</div>
<div class="a" style="left:1850px;top:522px;width:4px;height:1px;background:#111"></div>
<div class="t" style="left:1334px;top:534px;font-size:12.3px;color:#111">0</div>
<div class="lr" style="left:1391px;top:534px;width:100px;color:#111">273669.32</div>
<div class="lr" style="left:1527px;top:534px;width:100px;color:#111">4336526.80</div>
<div class="lr" style="left:1618px;top:534px;width:100px;color:#111">+134.17</div>
<div class="a" style="left:1850px;top:541px;width:4px;height:1px;background:#111"></div>
<div class="t" style="left:1334px;top:553px;font-size:12.3px;color:#111">0</div>
<div class="lr" style="left:1391px;top:553px;width:100px;color:#111">273666.82</div>
<div class="lr" style="left:1527px;top:553px;width:100px;color:#111">4336527.32</div>
<div class="lr" style="left:1618px;top:553px;width:100px;color:#111">+134.26</div>
<div class="a" style="left:1850px;top:560px;width:4px;height:1px;background:#111"></div>
<div class="t" style="left:1334px;top:572px;font-size:12.3px;color:#111">0</div>
<div class="lr" style="left:1391px;top:572px;width:100px;color:#111">273667.69</div>
<div class="lr" style="left:1527px;top:572px;width:100px;color:#111">4336531.62</div>
<div class="lr" style="left:1618px;top:572px;width:100px;color:#111">+134.49</div>
<div class="a" style="left:1850px;top:579px;width:4px;height:1px;background:#111"></div>
<div class="t" style="left:1334px;top:591px;font-size:12.3px;color:#111">0</div>
<div class="lr" style="left:1391px;top:591px;width:100px;color:#111">273668.36</div>
<div class="lr" style="left:1527px;top:591px;width:100px;color:#111">4336531.16</div>
<div class="lr" style="left:1618px;top:591px;width:100px;color:#111">+134.46</div>
<div class="a" style="left:1850px;top:598px;width:4px;height:1px;background:#111"></div>
<div class="t" style="left:1334px;top:610px;font-size:12.3px;color:#111">0</div>
<div class="lr" style="left:1391px;top:610px;width:100px;color:#111">273667.83</div>
<div class="lr" style="left:1527px;top:610px;width:100px;color:#111">4336531.05</div>
<div class="lr" style="left:1618px;top:610px;width:100px;color:#111">+134.44</div>
<div class="a" style="left:1850px;top:617px;width:4px;height:1px;background:#111"></div>
<div class="t" style="left:1334px;top:629px;font-size:12.3px;color:#111">0</div>
<div class="lr" style="left:1391px;top:629px;width:100px;color:#111">273668.11</div>
<div class="lr" style="left:1527px;top:629px;width:100px;color:#111">4336531.00</div>
<div class="lr" style="left:1618px;top:629px;width:100px;color:#111">+134.46</div>
<div class="a" style="left:1850px;top:636px;width:4px;height:1px;background:#111"></div>
<div class="t" style="left:1334px;top:648px;font-size:12.3px;color:#111">0</div>
<div class="lr" style="left:1391px;top:648px;width:100px;color:#111">273668.84</div>
<div class="lr" style="left:1527px;top:648px;width:100px;color:#111">4336530.67</div>
<div class="lr" style="left:1618px;top:648px;width:100px;color:#111">+134.43</div>
<div class="a" style="left:1850px;top:655px;width:4px;height:1px;background:#111"></div>
<div class="t" style="left:1334px;top:667px;font-size:12.3px;color:#111">0</div>
<div class="lr" style="left:1391px;top:667px;width:100px;color:#111">273668.67</div>
<div class="lr" style="left:1527px;top:667px;width:100px;color:#111">4336530.49</div>
<div class="lr" style="left:1618px;top:667px;width:100px;color:#111">+134.43</div>
<div class="a" style="left:1850px;top:674px;width:4px;height:1px;background:#111"></div>
<div class="t" style="left:1334px;top:686px;font-size:12.3px;color:#111">0</div>
<div class="lr" style="left:1391px;top:686px;width:100px;color:#111">273667.93</div>
<div class="lr" style="left:1527px;top:686px;width:100px;color:#111">4336530.44</div>
<div class="lr" style="left:1618px;top:686px;width:100px;color:#111">+134.42</div>
<div class="a" style="left:1850px;top:693px;width:4px;height:1px;background:#111"></div>
<div class="t" style="left:1334px;top:705px;font-size:12.3px;color:#111">0</div>
<div class="lr" style="left:1391px;top:705px;width:100px;color:#111">273668.43</div>
<div class="lr" style="left:1527px;top:705px;width:100px;color:#111">4336530.33</div>
<div class="lr" style="left:1618px;top:705px;width:100px;color:#111">+134.43</div>
<div class="a" style="left:1850px;top:712px;width:4px;height:1px;background:#111"></div>
<div class="t" style="left:1334px;top:724px;font-size:12.3px;color:#111">0</div>
<div class="lr" style="left:1391px;top:724px;width:100px;color:#111">273669.43</div>
<div class="lr" style="left:1527px;top:724px;width:100px;color:#111">4336530.10</div>
<div class="lr" style="left:1618px;top:724px;width:100px;color:#111">+134.40</div>
<div class="a" style="left:1850px;top:731px;width:4px;height:1px;background:#111"></div>
<div class="t" style="left:1334px;top:743px;font-size:12.3px;color:#111">0</div>
<div class="lr" style="left:1391px;top:743px;width:100px;color:#111">273667.76</div>
<div class="lr" style="left:1527px;top:743px;width:100px;color:#111">4336530.29</div>
<div class="lr" style="left:1618px;top:743px;width:100px;color:#111">+134.41</div>
<div class="a" style="left:1850px;top:750px;width:4px;height:1px;background:#111"></div>
<div class="a" style="left:1318px;top:783px;width:135px;height:26px;background:#e1e1e1;border:1px solid #adadad"></div>
<div class="t" style="left:1318px;top:789px;width:135px;text-align:center">Show location</div>
<div class="a" style="left:1742px;top:783px;width:135px;height:26px;background:#e1e1e1;border:1px solid #adadad"></div>
<div class="t" style="left:1742px;top:789px;width:135px;text-align:center">Identify</div>
</body></html>
